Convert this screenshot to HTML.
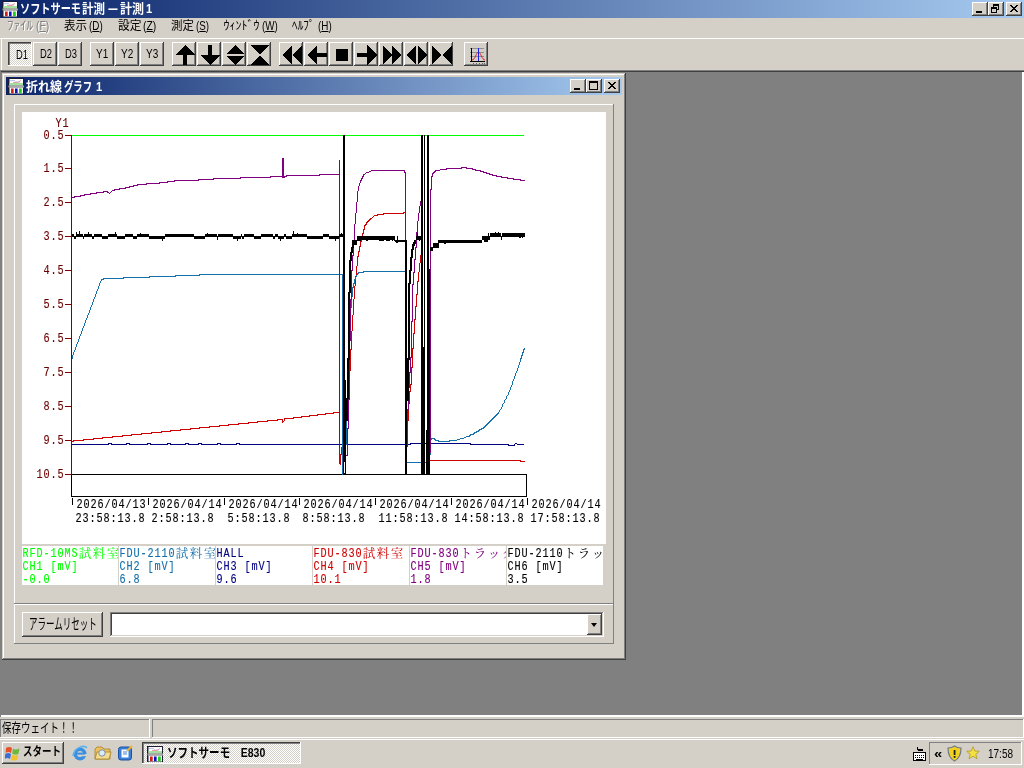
<!DOCTYPE html>
<html lang="ja"><head><meta charset="utf-8"><title>ソフトサーモ計測 - 計測1</title>
<style>
html,body{margin:0;padding:0;width:1024px;height:768px;overflow:hidden;background:#D4D0C8;}
body{position:relative;font-family:"Liberation Sans","Noto Sans CJK JP",sans-serif;font-size:12px;line-height:12px;color:#000;}
div,span,svg{position:absolute;box-sizing:border-box;}
.t{white-space:nowrap;transform-origin:0 0;display:block;}
u{text-decoration:underline;text-underline-offset:1px;}
.raised{background:#D4D0C8;box-shadow:inset -1px -1px 0 #404040,inset 1px 1px 0 #fff,inset -2px -2px 0 #808080;}
.tb{background:#D4D0C8;box-shadow:inset -1px -1px 0 #404040,inset 1px 1px 0 #fff,inset -2px -2px 0 #808080;width:24px;height:24px;top:42px;}
.tbp{background:repeating-conic-gradient(#fff 0% 25%,#D4D0C8 0% 50%) 0 0/2px 2px;box-shadow:inset -1px -1px 0 #fff,inset 1px 1px 0 #404040,inset 2px 2px 0 #808080;width:24px;height:24px;top:42px;}
.win{background:#D4D0C8;box-shadow:inset -1px -1px 0 #404040,inset 1px 1px 0 #D4D0C8,inset -2px -2px 0 #808080,inset 2px 2px 0 #fff;}
.sunken{background:#fff;box-shadow:inset -1px -1px 0 #fff,inset 1px 1px 0 #808080,inset -2px -2px 0 #D4D0C8,inset 2px 2px 0 #404040;}
.panel{background:#D4D0C8;box-shadow:inset -1px -1px 0 #808080,inset 1px 1px 0 #fff;}
.spane{background:#D4D0C8;box-shadow:inset -1px -1px 0 #fff,inset 1px 1px 0 #808080;}
.cap{background:#D4D0C8;box-shadow:inset -1px -1px 0 #404040,inset 1px 1px 0 #fff,inset -2px -2px 0 #808080;width:16px;height:14px;}
.grad{background:linear-gradient(90deg,#0A246A 0%,#A6CAF0 100%);}
.ttl{color:#fff;font-weight:bold;font-size:13px;line-height:13px;}
.lg{background:#fff;width:96px;height:39px;top:546px;overflow:hidden;}
</style></head>
<body>
<div id="root" style="left:0;top:0;width:1024px;height:768px;will-change:transform">
<div class="grad" style="left:0;top:0;width:1024px;height:18px"></div>
<svg style="left:2px;top:1px" width="16" height="16" viewBox="0 0 16 16">
<rect x="0" y="0" width="16" height="16" fill="#1c1c34"/>
<rect x="1.5" y="1" width="13.5" height="6.5" fill="#fff"/>
<rect x="1.5" y="5" width="13.5" height="2.5" fill="#a4e09c"/>
<path d="M2 2.6H7M7 4H12" stroke="#b0b8f0" stroke-width="0.9" fill="none"/><path d="M5 4.4H10L13 2.5" stroke="#e89090" stroke-width="0.9" fill="none"/>
<rect x="0.5" y="7.5" width="15.5" height="2" fill="#a8a8a8"/>
<rect x="1.5" y="9.5" width="13.5" height="6" fill="#fff"/>
<rect x="3" y="10.5" width="2.7" height="4.7" fill="#d02020"/><rect x="7" y="10.5" width="2.6" height="4.7" fill="#1010c0"/><rect x="11" y="10.5" width="2.8" height="4.7" fill="#20d020"/>
</svg>
<span id="t_main1" class="t ttl" style="left:20px;top:2px;transform:scaleX(0.7821);">ソフトサーモ</span>
<span id="t_main2" class="t ttl" style="left:82px;top:2px;transform:scaleX(0.8846);">計測 </span>
<span id="t_main3" class="t ttl" style="left:107px;top:2px;transform:scaleX(2.7500);">- </span>
<span id="t_main4" class="t ttl" style="left:120px;top:2px;transform:scaleX(0.9231);">計測</span>
<span id="t_main5" class="t ttl" style="left:146px;top:2px;transform:scaleX(0.8571);">1</span>
<div class="cap" style="left:972px;top:2px"><div style="left:4px;top:9px;width:6px;height:2px;background:#000"></div></div><div class="cap" style="left:988px;top:2px"><div style="left:5px;top:2px;width:6px;height:6px;border:1px solid #000;border-top-width:2px"></div><div style="left:3px;top:5px;width:6px;height:6px;border:1px solid #000;border-top-width:2px;background:#D4D0C8"></div></div><div class="cap" style="left:1006px;top:2px"><svg style="left:4px;top:3px" width="8" height="7" viewBox="0 0 8 7" shape-rendering="crispEdges"><path d="M0 0h2v1h1v1h2v-1h1v-1h2v1h-1v1h-1v1h-1v1h1v1h1v1h1v1h-2v-1h-1v-1h-2v1h-1v1h-2v-1h1v-1h1v-1h1v-1h-1v-1h-1v-1h-1z" fill="#000"/></svg></div>
<span id="m0as" class="t " style="left:8px;top:21px;transform:scaleX(1.0833);color:#fff">ﾌｧｲﾙ</span>
<span id="m0bs" class="t " style="left:37px;top:21px;transform:scaleX(0.8667);color:#fff">(<u>F</u>)</span>
<span id="m0a" class="t " style="left:7px;top:20px;transform:scaleX(1.0833);color:#808080">ﾌｧｲﾙ</span>
<span id="m0b" class="t " style="left:36px;top:20px;transform:scaleX(0.8667);color:#808080">(<u>F</u>)</span>
<span id="m1a" class="t " style="left:64px;top:20px;transform:scaleX(0.9583);">表示</span>
<span id="m1b" class="t " style="left:89px;top:20px;transform:scaleX(0.8235);">(<u>D</u>)</span>
<span id="m2a" class="t " style="left:117.5px;top:20px;transform:scaleX(0.9792);">設定</span>
<span id="m2b" class="t " style="left:143px;top:20px;transform:scaleX(0.8667);">(<u>Z</u>)</span>
<span id="m3a" class="t " style="left:170.5px;top:20px;transform:scaleX(0.9583);">測定</span>
<span id="m3b" class="t " style="left:196px;top:20px;transform:scaleX(0.8125);">(<u>S</u>)</span>
<span id="m4a" class="t " style="left:223.5px;top:20px;transform:scaleX(1.0000);">ｳｨﾝﾄﾞｳ</span>
<span id="m4b" class="t " style="left:261.5px;top:20px;transform:scaleX(0.8158);">(<u>W</u>)</span>
<span id="m5a" class="t " style="left:292px;top:20px;transform:scaleX(0.9375);">ﾍﾙﾌﾟ</span>
<span id="m5b" class="t " style="left:318px;top:20px;transform:scaleX(0.8235);">(<u>H</u>)</span>
<div style="left:0;top:38px;width:1024px;height:1px;background:#fff"></div>
<div style="left:0;top:70px;width:1024px;height:1px;background:#808080"></div>
<div style="left:1px;top:39px;width:1px;height:31px;background:#fff"></div>
<div class="tbp" style="left:8px"></div>
<span id="tb0" class="t " style="left:16px;top:49px;transform:scaleX(0.7500);font-size:12.5px;line-height:12.5px">D1</span>
<div class="tb" style="left:33px"></div>
<span id="tb1" class="t " style="left:40px;top:48px;transform:scaleX(0.7500);font-size:12.5px;line-height:12.5px">D2</span>
<div class="tb" style="left:58px"></div>
<span id="tb2" class="t " style="left:65px;top:48px;transform:scaleX(0.7500);font-size:12.5px;line-height:12.5px">D3</span>
<div class="tb" style="left:90px"></div>
<span id="tb3" class="t " style="left:96px;top:48px;transform:scaleX(0.8000);font-size:12.5px;line-height:12.5px">Y1</span>
<div class="tb" style="left:115px"></div>
<span id="tb4" class="t " style="left:121px;top:48px;transform:scaleX(0.8000);font-size:12.5px;line-height:12.5px">Y2</span>
<div class="tb" style="left:140px"></div>
<span id="tb5" class="t " style="left:146px;top:48px;transform:scaleX(0.8000);font-size:12.5px;line-height:12.5px">Y3</span>
<div class="tb" style="left:172px"><svg style="left:0;top:0" width="24" height="24" viewBox="0 0 24 24" shape-rendering="crispEdges"><path d="M13 3 L23 13 H15 V23 H11 V13 H3 Z" fill="#000"/></svg></div>
<div class="tb" style="left:197px"><svg style="left:0;top:0" width="24" height="24" viewBox="0 0 24 24" shape-rendering="crispEdges"><path d="M13 23 L23 13 H15 V3 H11 V13 H3 Z" fill="#000"/></svg></div>
<div class="tb" style="left:222px"><svg style="left:0;top:0" width="24" height="24" viewBox="0 0 24 24" shape-rendering="crispEdges"><path d="M13 3 L22 12 H4 Z M13 23 L22 14 H4 Z" fill="#000"/></svg></div>
<div class="tb" style="left:247px"><svg style="left:0;top:0" width="24" height="24" viewBox="0 0 24 24" shape-rendering="crispEdges"><path d="M4 3 H22 L13 12.5 Z M4 23 H22 L13 13.5 Z" fill="#000"/></svg></div>
<div class="tb" style="left:279px"><svg style="left:0;top:0" width="24" height="24" viewBox="0 0 24 24" shape-rendering="crispEdges"><path d="M13 3.5 V22.5 L3.5 13 Z M22.5 3.5 V22.5 L13 13 Z" fill="#000"/></svg></div>
<div class="tb" style="left:304px"><svg style="left:0;top:0" width="24" height="24" viewBox="0 0 24 24" shape-rendering="crispEdges"><path d="M3 13 L13 3 V11 H23 V15 H13 V23 Z" fill="#000"/></svg></div>
<div class="tb" style="left:329px"><svg style="left:0;top:0" width="24" height="24" viewBox="0 0 24 24" shape-rendering="crispEdges"><rect x="7" y="7" width="12" height="12" fill="#000"/></svg></div>
<div class="tb" style="left:354px"><svg style="left:0;top:0" width="24" height="24" viewBox="0 0 24 24" shape-rendering="crispEdges"><path d="M23 13 L13 3 V11 H3 V15 H13 V23 Z" fill="#000"/></svg></div>
<div class="tb" style="left:379px"><svg style="left:0;top:0" width="24" height="24" viewBox="0 0 24 24" shape-rendering="crispEdges"><path d="M4 3.5 V22.5 L13 13 Z M13 3.5 V22.5 L22.5 13 Z" fill="#000"/></svg></div>
<div class="tb" style="left:404px"><svg style="left:0;top:0" width="24" height="24" viewBox="0 0 24 24" shape-rendering="crispEdges"><path d="M12 3.5 V22.5 L3 13 Z M14 3.5 V22.5 L23 13 Z" fill="#000"/></svg></div>
<div class="tb" style="left:429px"><svg style="left:0;top:0" width="24" height="24" viewBox="0 0 24 24" shape-rendering="crispEdges"><path d="M3 3.5 V22.5 L12.5 13 Z M23 3.5 V22.5 L13.5 13 Z" fill="#000"/></svg></div>
<div class="tb" style="left:464px"><svg style="left:0;top:0" width="24" height="24" viewBox="0 0 24 24" shape-rendering="crispEdges"><path d="M6 6.5H20M6 10.5H20M6 14.5H20" stroke="#909090" fill="none"/><path d="M7.5 6V20M6 19.5H21" stroke="#000" fill="none"/><path d="M9 21v1M12 21v1M15 21v1M18 21v1M20 21v1" stroke="#606060" fill="none"/><path d="M8 18 C11 18 12.5 10 14.5 10 C16.5 10 18 18 21 18" stroke="#e02020" stroke-width="1" fill="none" shape-rendering="auto"/><path d="M14.5 6V19" stroke="#2020e0" stroke-width="1" fill="none"/></svg></div>
<div style="left:0;top:71px;width:1024px;height:646px;background:#808080;box-shadow:inset 1px 1px 0 #404040,inset -2px -2px 0 #fff"></div>
<div style="left:0;top:70px;width:1px;height:647px;background:#808080"></div>
<div class="win" style="left:2px;top:73px;width:624px;height:587px"></div>
<div class="grad" style="left:6px;top:77px;width:616px;height:18px"></div>
<svg style="left:8px;top:78px" width="16" height="16" viewBox="0 0 16 16">
<rect x="0" y="0" width="16" height="16" fill="#1c1c34"/>
<rect x="1.5" y="1" width="13.5" height="6.5" fill="#fff"/>
<rect x="1.5" y="5" width="13.5" height="2.5" fill="#a4e09c"/>
<path d="M2 2.6H7M7 4H12" stroke="#b0b8f0" stroke-width="0.9" fill="none"/><path d="M5 4.4H10L13 2.5" stroke="#e89090" stroke-width="0.9" fill="none"/>
<rect x="0.5" y="7.5" width="15.5" height="2" fill="#a8a8a8"/>
<rect x="1.5" y="9.5" width="13.5" height="6" fill="#fff"/>
<rect x="3" y="10.5" width="2.7" height="4.7" fill="#d02020"/><rect x="7" y="10.5" width="2.6" height="4.7" fill="#1010c0"/><rect x="11" y="10.5" width="2.8" height="4.7" fill="#20d020"/>
</svg>
<span id="t_child1" class="t ttl" style="left:26px;top:80px;transform:scaleX(0.9231);">折れ線</span>
<span id="t_child2" class="t ttl" style="left:64px;top:80px;transform:scaleX(0.7179);">グラフ </span>
<span id="t_child3" class="t ttl" style="left:96px;top:80px;transform:scaleX(0.8571);">1</span>
<div class="cap" style="left:570px;top:79px"><div style="left:4px;top:9px;width:6px;height:2px;background:#000"></div></div><div class="cap" style="left:586px;top:79px"><div style="left:3px;top:2px;width:9px;height:9px;border:1px solid #000;border-top-width:2px"></div></div><div class="cap" style="left:604px;top:79px"><svg style="left:4px;top:3px" width="8" height="7" viewBox="0 0 8 7" shape-rendering="crispEdges"><path d="M0 0h2v1h1v1h2v-1h1v-1h2v1h-1v1h-1v1h-1v1h1v1h1v1h1v1h-2v-1h-1v-1h-2v1h-1v1h-2v-1h1v-1h1v-1h1v-1h-1v-1h-1v-1h-1z" fill="#000"/></svg></div>
<div class="panel" style="left:14px;top:104px;width:600px;height:500px"></div>
<div class="panel" style="left:14px;top:604px;width:600px;height:40px"></div>
<div style="left:22px;top:112px;width:584px;height:432px;background:#fff"></div>
<svg style="left:22px;top:112px" width="584" height="432" viewBox="22 112 584 432" shape-rendering="crispEdges" font-family='"Liberation Mono","Noto Serif CJK SC",monospace' font-size="13">
<rect x="71.5" y="474.5" width="455" height="22" fill="none" stroke="#000"/>
<path d="M72,135.5 L524,135.5" stroke="#00FF00" stroke-width="1" fill="none" />
<path d="M72,444.5 L108,444.5 L108,443.5 L111,443.5 L111,444.5 L126,444.5 L126,443.5 L129,443.5 L129,444.5 L147,444.5 L147,443.5 L150,443.5 L150,444.5 L167,444.5 L167,443.5 L170,443.5 L170,444.5 L185,444.5 L185,443.5 L188,443.5 L188,444.5 L198,444.5 L198,443.5 L201,443.5 L201,444.5 L217,444.5 L217,443.5 L220,443.5 L220,444.5 L236,444.5 L236,443.5 L239,443.5 L239,444.5 L410,444.5 L410,443.5 L470,443.5 L470,444.5 L508,444.5 L508,445.5 L514,445.5 L514,444.5 L516,443.5 L518,444.5 L524,444.5" stroke="#000080" stroke-width="1" fill="none" />
<path d="M72.5,441.5 L72.5,441.5 L74.5,440.5 L74.5,440.5 L76.5,440.5 L76.5,440.5 L78.5,440.5 L78.5,440.5 L80.5,440.5 L80.5,440.5 L82.5,440.5 L82.5,440.5 L84.5,439.5 L84.5,439.5 L86.5,439.5 L86.5,439.5 L88.5,439.5 L88.5,439.5 L90.5,439.5 L90.5,439.5 L92.5,439.5 L92.5,439.5 L94.5,438.5 L94.5,438.5 L96.5,438.5 L96.5,438.5 L98.5,438.5 L98.5,438.5 L100.5,438.5 L100.5,438.5 L102.5,438.5 L102.5,437.5 L104.5,437.5 L104.5,437.5 L106.5,437.5 L106.5,437.5 L108.5,437.5 L108.5,437.5 L110.5,437.5 L110.5,437.5 L112.5,437.5 L112.5,436.5 L114.5,436.5 L114.5,436.5 L116.5,436.5 L116.5,436.5 L118.5,436.5 L118.5,436.5 L120.5,436.5 L120.5,436.5 L122.5,436.5 L122.5,435.5 L124.5,435.5 L124.5,435.5 L126.5,435.5 L126.5,435.5 L128.5,435.5 L128.5,435.5 L130.5,435.5 L130.5,435.5 L132.5,434.5 L132.5,434.5 L134.5,434.5 L134.5,434.5 L136.5,434.5 L136.5,434.5 L138.5,434.5 L138.5,434.5 L140.5,434.5 L140.5,434.5 L142.5,433.5 L142.5,433.5 L144.5,433.5 L144.5,433.5 L146.5,433.5 L146.5,433.5 L148.5,433.5 L148.5,433.5 L150.5,433.5 L150.5,433.5 L152.5,432.5 L152.5,432.5 L154.5,432.5 L154.5,432.5 L156.5,432.5 L156.5,432.5 L158.5,432.5 L158.5,432.5 L160.5,432.5 L160.5,432.5 L162.5,431.5 L162.5,431.5 L164.5,431.5 L164.5,431.5 L166.5,431.5 L166.5,431.5 L168.5,431.5 L168.5,431.5 L170.5,431.5 L170.5,430.5 L172.5,430.5 L172.5,430.5 L174.5,430.5 L174.5,430.5 L176.5,430.5 L176.5,430.5 L178.5,430.5 L178.5,430.5 L180.5,430.5 L180.5,429.5 L182.5,429.5 L182.5,429.5 L184.5,429.5 L184.5,429.5 L186.5,429.5 L186.5,429.5 L188.5,429.5 L188.5,429.5 L190.5,429.5 L190.5,428.5 L192.5,428.5 L192.5,428.5 L194.5,428.5 L194.5,428.5 L196.5,428.5 L196.5,428.5 L198.5,428.5 L198.5,428.5 L200.5,427.5 L200.5,427.5 L202.5,427.5 L202.5,427.5 L204.5,427.5 L204.5,427.5 L206.5,427.5 L206.5,427.5 L208.5,427.5 L208.5,427.5 L210.5,426.5 L210.5,426.5 L212.5,426.5 L212.5,426.5 L214.5,426.5 L214.5,426.5 L216.5,426.5 L216.5,426.5 L218.5,426.5 L218.5,426.5 L220.5,425.5 L220.5,425.5 L222.5,425.5 L222.5,425.5 L224.5,425.5 L224.5,425.5 L226.5,425.5 L226.5,425.5 L228.5,425.5 L228.5,424.5 L230.5,424.5 L230.5,424.5 L232.5,424.5 L232.5,424.5 L234.5,424.5 L234.5,424.5 L236.5,424.5 L236.5,424.5 L238.5,424.5 L238.5,423.5 L240.5,423.5 L240.5,423.5 L242.5,423.5 L242.5,423.5 L244.5,423.5 L244.5,423.5 L246.5,423.5 L246.5,423.5 L248.5,423.5 L248.5,422.5 L250.5,422.5 L250.5,422.5 L252.5,422.5 L252.5,422.5 L254.5,422.5 L254.5,422.5 L256.5,422.5 L256.5,422.5 L258.5,421.5 L258.5,421.5 L260.5,421.5 L260.5,421.5 L262.5,421.5 L262.5,421.5 L264.5,421.5 L264.5,421.5 L266.5,421.5 L266.5,421.5 L268.5,420.5 L268.5,420.5 L270.5,420.5 L270.5,420.5 L272.5,420.5 L272.5,420.5 L274.5,420.5 L274.5,420.5 L276.5,420.5 L276.5,420.5 L278.5,419.5 L278.5,419.5 L280.5,419.5 L280.5,419.5 L282.5,419.5 L282.5,420.5 L282.5,421.5 L282.5,422.5 L283.5,421.5 L284.5,420.5 L284.5,418.5 L286.5,418.5 L286.5,418.5 L288.5,418.5 L288.5,418.5 L290.5,418.5 L290.5,418.5 L292.5,418.5 L292.5,418.5 L294.5,417.5 L294.5,417.5 L296.5,417.5 L296.5,417.5 L298.5,417.5 L298.5,417.5 L300.5,417.5 L300.5,417.5 L302.5,416.5 L302.5,416.5 L304.5,416.5 L304.5,416.5 L306.5,416.5 L306.5,416.5 L308.5,416.5 L308.5,416.5 L310.5,415.5 L310.5,415.5 L312.5,415.5 L312.5,415.5 L314.5,415.5 L314.5,415.5 L316.5,415.5 L316.5,415.5 L318.5,414.5 L318.5,414.5 L320.5,414.5 L320.5,414.5 L322.5,414.5 L322.5,414.5 L324.5,414.5 L324.5,414.5 L326.5,413.5 L326.5,413.5 L328.5,413.5 L328.5,413.5 L330.5,413.5 L330.5,413.5 L332.5,413.5 L332.5,413.5 L334.5,412.5 L334.5,412.5 L336.5,412.5 L336.5,412.5 L338.5,412.5 L338.5,412.5" stroke="#D00000" stroke-width="1" fill="none" />
<path d="M338.5,412.5 L339.5,413.5 L339.5,414.5 L339.5,415.5 L339.5,416.5 L339.5,417.5 L339.5,418.5 L339.5,419.5 L339.5,420.5 L339.5,421.5 L339.5,422.5 L339.5,423.5 L339.5,424.5 L339.5,425.5 L339.5,426.5 L339.5,427.5 L339.5,428.5 L339.5,429.5 L339.5,430.5 L339.5,431.5 L339.5,432.5 L339.5,433.5 L339.5,434.5 L339.5,435.5 L339.5,436.5 L339.5,437.5 L339.5,438.5 L339.5,439.5 L339.5,440.5 L339.5,441.5 L339.5,442.5 L339.5,443.5 L339.5,444.5 L339.5,445.5 L339.5,446.5 L339.5,447.5 L339.5,448.5 L339.5,449.5 L339.5,450.5 L339.5,451.5 L339.5,452.5 L339.5,453.5 L339.5,454.5 L339.5,455.5 L339.5,456.5 L339.5,457.5 L339.5,458.5 L339.5,459.5 L339.5,460.5 L339.5,461.5 L339.5,462.5 L340.5,464.5 L340.5,462.5 L340.5,462.5 L340.5,460.5 L340.5,460.5 L340.5,458.5 L340.5,458.5 L340.5,456.5 L340.5,456.5 L340.5,454.5 L341.5,454.5 L341.5,452.5 L341.5,452.5 L341.5,450.5 L341.5,450.5 L341.5,448.5 L341.5,448.5 L342.5,446.5 L342.5,446.5 L342.5,444.5 L342.5,444.5 L342.5,442.5 L342.5,442.5 L342.5,440.5 L342.5,440.5" stroke="#D00000" stroke-width="1" fill="none" />
<path d="M342.5,454.5 L343.5,454.5 L343.5,452.5 L343.5,452.5 L343.5,450.5 L343.5,450.5 L343.5,448.5 L343.5,448.5 L343.5,446.5 L343.5,446.5 L343.5,444.5 L343.5,444.5 L343.5,442.5 L344.5,442.5 L344.5,440.5 L344.5,440.5 L344.5,438.5 L344.5,438.5 L344.5,436.5 L344.5,436.5 L344.5,434.5 L344.5,434.5 L344.5,432.5 L344.5,432.5 L344.5,430.5 L344.5,430.5 L345.5,428.5 L345.5,428.5 L345.5,426.5 L345.5,426.5 L345.5,424.5 L345.5,424.5 L345.5,422.5 L345.5,422.5 L345.5,420.5 L345.5,420.5 L345.5,418.5 L345.5,418.5 L345.5,416.5 L346.5,416.5 L346.5,414.5 L346.5,414.5 L346.5,412.5 L346.5,412.5 L346.5,410.5 L346.5,410.5 L346.5,408.5 L346.5,408.5 L346.5,406.5 L346.5,406.5 L346.5,404.5 L346.5,404.5 L346.5,402.5 L346.5,402.5 L347.5,400.5 L347.5,400.5 L347.5,398.5 L347.5,398.5 L347.5,396.5 L347.5,396.5 L347.5,394.5 L347.5,394.5 L348.5,392.5 L348.5,392.5 L348.5,390.5 L348.5,390.5 L348.5,388.5 L348.5,388.5 L348.5,386.5 L348.5,386.5 L348.5,384.5 L349.5,384.5 L349.5,382.5 L349.5,382.5 L349.5,380.5 L349.5,380.5 L349.5,378.5 L349.5,378.5 L349.5,376.5 L349.5,376.5 L349.5,374.5 L349.5,374.5 L349.5,372.5 L349.5,372.5 L349.5,370.5 L350.5,370.5 L350.5,368.5 L350.5,368.5 L350.5,366.5 L350.5,366.5 L350.5,364.5 L350.5,364.5 L350.5,362.5 L350.5,362.5 L350.5,360.5 L350.5,360.5 L350.5,358.5 L350.5,358.5 L350.5,356.5 L350.5,356.5 L350.5,354.5 L350.5,354.5 L350.5,352.5 L350.5,352.5 L350.5,350.5 L350.5,350.5 L351.5,348.5 L351.5,348.5 L351.5,346.5 L351.5,346.5 L351.5,344.5 L351.5,344.5 L351.5,342.5 L351.5,342.5 L351.5,340.5 L351.5,340.5 L351.5,338.5 L351.5,337.5 L351.5,336.5 L351.5,335.5 L351.5,334.5 L351.5,333.5 L351.5,332.5 L351.5,331.5 L352.5,330.5 L352.5,329.5 L352.5,328.5 L352.5,327.5 L352.5,326.5 L352.5,325.5 L352.5,324.5 L352.5,323.5 L352.5,322.5 L352.5,321.5 L352.5,320.5 L352.5,319.5 L352.5,318.5 L352.5,317.5 L352.5,316.5 L352.5,315.5 L353.5,314.5 L353.5,313.5 L353.5,312.5 L353.5,311.5 L353.5,310.5 L353.5,309.5 L353.5,308.5 L353.5,307.5 L353.5,306.5 L353.5,305.5 L353.5,304.5 L353.5,303.5 L353.5,302.5 L353.5,301.5 L353.5,300.5 L353.5,299.5 L354.5,298.5 L354.5,297.5 L354.5,296.5 L354.5,295.5 L354.5,294.5 L354.5,293.5 L354.5,292.5 L354.5,291.5 L354.5,290.5 L354.5,289.5 L354.5,288.5 L354.5,287.5 L354.5,286.5 L355.5,285.5 L355.5,284.5 L355.5,283.5 L355.5,282.5 L355.5,281.5 L355.5,280.5 L355.5,279.5 L355.5,278.5 L355.5,277.5 L355.5,276.5 L356.5,275.5 L356.5,274.5 L356.5,273.5 L356.5,272.5 L356.5,271.5 L356.5,270.5 L356.5,269.5 L356.5,268.5 L356.5,267.5 L356.5,266.5 L357.5,265.5 L357.5,264.5 L357.5,263.5 L357.5,262.5 L357.5,261.5 L357.5,260.5 L357.5,259.5 L357.5,258.5 L357.5,256.5 L358.5,256.5 L358.5,254.5 L358.5,254.5 L358.5,252.5 L358.5,252.5 L359.5,250.5 L359.5,250.5 L359.5,248.5 L359.5,248.5 L359.5,246.5 L360.5,246.5 L360.5,244.5 L360.5,244.5 L360.5,242.5 L360.5,242.5 L361.5,240.5 L361.5,240.5 L361.5,238.5 L361.5,238.5 L361.5,236.5 L362.5,236.5 L362.5,234.5 L362.5,234.5 L363.5,232.5 L363.5,232.5 L363.5,230.5 L363.5,230.5 L364.5,228.5 L364.5,228.5 L364.5,226.5 L364.5,226.5 L365.5,224.5 L366.5,224.5 L366.5,222.5 L367.5,222.5 L368.5,220.5 L369.5,220.5 L370.5,218.5 L371.5,218.5 L372.5,217.5 L373.5,216.5 L374.5,215.5 L376.5,215.5 L376.5,215.5 L378.5,214.5 L378.5,214.5 L380.5,214.5 L380.5,214.5 L382.5,214.5 L382.5,214.5 L384.5,213.5 L384.5,213.5 L386.5,213.5 L386.5,213.5 L388.5,213.5 L388.5,213.5 L390.5,213.5 L390.5,213.5 L392.5,213.5 L392.5,213.5 L394.5,213.5 L394.5,213.5 L396.5,213.5 L396.5,213.5 L398.5,213.5 L398.5,213.5 L400.5,213.5 L400.5,213.5 L402.5,213.5 L402.5,213.5 L404.5,212.5 L405.5,212.5" stroke="#D00000" stroke-width="1" fill="none" />
<path d="M406.5,446.5 L407.5,446.5 L407.5,444.5 L407.5,444.5 L407.5,442.5 L407.5,442.5 L407.5,440.5 L407.5,440.5 L407.5,438.5 L407.5,438.5 L407.5,436.5 L407.5,436.5 L407.5,434.5 L407.5,434.5 L407.5,432.5 L407.5,432.5 L407.5,430.5 L407.5,430.5 L407.5,428.5 L407.5,428.5 L407.5,426.5 L407.5,426.5 L407.5,424.5 L407.5,424.5 L407.5,422.5 L407.5,422.5 L407.5,420.5 L408.5,420.5 L408.5,418.5 L408.5,418.5 L408.5,416.5 L408.5,416.5 L408.5,414.5 L408.5,414.5 L408.5,412.5 L408.5,412.5 L408.5,410.5 L408.5,410.5 L408.5,408.5 L408.5,408.5 L408.5,406.5 L408.5,406.5 L408.5,404.5 L408.5,404.5 L409.5,402.5 L409.5,402.5 L409.5,400.5 L409.5,400.5 L409.5,398.5 L409.5,398.5 L409.5,396.5 L409.5,396.5 L409.5,394.5 L409.5,394.5 L409.5,392.5 L409.5,392.5 L410.5,390.5 L410.5,390.5 L410.5,388.5 L410.5,388.5 L410.5,386.5 L410.5,386.5 L410.5,384.5 L411.5,384.5 L411.5,382.5 L411.5,382.5 L411.5,380.5 L411.5,380.5 L411.5,378.5 L411.5,378.5 L411.5,376.5 L411.5,376.5 L411.5,374.5 L411.5,374.5 L411.5,372.5 L411.5,372.5 L411.5,370.5 L411.5,370.5 L411.5,368.5 L411.5,368.5 L412.5,366.5 L412.5,366.5 L412.5,364.5 L412.5,364.5 L412.5,362.5 L412.5,362.5 L412.5,360.5 L412.5,360.5 L412.5,358.5 L412.5,358.5 L412.5,356.5 L412.5,356.5 L412.5,354.5 L412.5,354.5 L412.5,352.5 L412.5,352.5 L412.5,350.5 L412.5,350.5 L412.5,348.5 L413.5,348.5 L413.5,346.5 L413.5,346.5 L413.5,344.5 L413.5,344.5 L413.5,342.5 L413.5,342.5 L413.5,340.5 L413.5,340.5 L413.5,338.5 L413.5,338.5 L413.5,336.5 L413.5,336.5 L413.5,334.5 L413.5,334.5 L414.5,332.5 L414.5,332.5 L414.5,330.5 L414.5,330.5 L414.5,328.5 L414.5,328.5 L414.5,326.5 L414.5,326.5 L414.5,324.5 L414.5,324.5 L414.5,322.5 L414.5,322.5 L414.5,320.5 L414.5,320.5 L415.5,318.5 L415.5,318.5 L415.5,316.5 L415.5,316.5 L415.5,314.5 L415.5,314.5 L415.5,312.5 L415.5,312.5 L415.5,310.5 L415.5,310.5 L415.5,308.5 L415.5,308.5 L415.5,306.5 L416.5,306.5 L416.5,304.5 L416.5,304.5 L416.5,302.5 L416.5,302.5 L416.5,300.5 L416.5,300.5 L416.5,298.5 L416.5,298.5 L416.5,296.5 L416.5,296.5 L416.5,294.5 L417.5,294.5 L417.5,292.5 L417.5,292.5 L417.5,290.5 L417.5,290.5 L417.5,288.5 L417.5,288.5 L417.5,286.5 L417.5,286.5 L417.5,284.5 L417.5,284.5 L417.5,282.5 L417.5,282.5 L418.5,280.5 L418.5,280.5 L418.5,278.5 L418.5,278.5 L418.5,276.5 L418.5,275.5 L418.5,274.5 L418.5,273.5 L418.5,272.5 L419.5,271.5 L419.5,270.5 L419.5,269.5 L419.5,268.5 L419.5,267.5 L419.5,266.5 L419.5,265.5 L419.5,264.5 L419.5,263.5 L420.5,262.5 L420.5,261.5 L420.5,260.5 L420.5,259.5 L420.5,258.5 L420.5,257.5 L420.5,256.5 L420.5,255.5 L421.5,254.5 L421.5,253.5" stroke="#D00000" stroke-width="1" fill="none" />
<path d="M430,460.5 L520,460.5 L520,461.5 L525,461.5" stroke="#D00000" stroke-width="1" fill="none" />
<path d="M72.5,358.5 L72.5,356.5 L72.5,355.5 L73.5,354.5 L73.5,353.5 L73.5,352.5 L74.5,351.5 L74.5,350.5 L75.5,349.5 L75.5,348.5 L75.5,347.5 L76.5,346.5 L76.5,345.5 L76.5,344.5 L77.5,343.5 L77.5,342.5 L78.5,341.5 L78.5,340.5 L78.5,339.5 L79.5,338.5 L79.5,337.5 L79.5,336.5 L80.5,335.5 L80.5,334.5 L81.5,333.5 L81.5,332.5 L81.5,331.5 L82.5,330.5 L82.5,329.5 L82.5,328.5 L83.5,327.5 L83.5,326.5 L84.5,325.5 L84.5,324.5 L84.5,323.5 L85.5,322.5 L85.5,321.5 L85.5,320.5 L86.5,319.5 L86.5,318.5 L87.5,317.5 L87.5,316.5 L87.5,315.5 L88.5,314.5 L88.5,313.5 L89.5,312.5 L89.5,311.5 L89.5,310.5 L90.5,309.5 L90.5,308.5 L90.5,307.5 L91.5,306.5 L91.5,305.5 L92.5,304.5 L92.5,303.5 L92.5,302.5 L93.5,301.5 L93.5,300.5 L93.5,299.5 L94.5,298.5 L94.5,297.5 L95.5,296.5 L95.5,295.5 L95.5,294.5 L96.5,293.5 L96.5,292.5 L96.5,291.5 L97.5,290.5 L97.5,289.5 L98.5,288.5 L98.5,287.5 L98.5,286.5 L99.5,285.5 L99.5,284.5 L99.5,283.5 L100.5,282.5 L100.5,281.5 L101.5,280.5 L101.5,279.5 L102.5,279.5 L104.5,278.5 L104.5,278.5 L106.5,278.5 L106.5,278.5 L108.5,278.5 L108.5,278.5 L110.5,278.5 L110.5,278.5 L112.5,278.5 L112.5,278.5 L114.5,278.5 L114.5,278.5 L116.5,278.5 L116.5,278.5 L118.5,278.5 L118.5,278.5 L120.5,278.5 L120.5,278.5 L122.5,278.5 L122.5,278.5 L124.5,277.5 L124.5,277.5 L126.5,277.5 L126.5,277.5 L128.5,277.5 L128.5,277.5 L130.5,277.5 L130.5,277.5 L132.5,277.5 L132.5,277.5 L134.5,277.5 L134.5,277.5 L136.5,277.5 L136.5,277.5 L138.5,277.5 L138.5,277.5 L140.5,277.5 L140.5,277.5 L142.5,277.5 L142.5,277.5 L144.5,277.5 L144.5,277.5 L146.5,277.5 L146.5,277.5 L148.5,277.5 L148.5,277.5 L150.5,276.5 L150.5,276.5 L152.5,276.5 L152.5,276.5 L154.5,276.5 L154.5,276.5 L156.5,276.5 L156.5,276.5 L158.5,276.5 L158.5,276.5 L160.5,276.5 L160.5,276.5 L162.5,276.5 L162.5,276.5 L164.5,276.5 L164.5,276.5 L166.5,276.5 L166.5,276.5 L168.5,276.5 L168.5,276.5 L170.5,276.5 L170.5,276.5 L172.5,276.5 L172.5,276.5 L174.5,276.5 L174.5,276.5 L176.5,275.5 L176.5,275.5 L178.5,275.5 L178.5,275.5 L180.5,275.5 L180.5,275.5 L182.5,275.5 L182.5,275.5 L184.5,275.5 L184.5,275.5 L186.5,275.5 L186.5,275.5 L188.5,275.5 L188.5,275.5 L190.5,275.5 L190.5,275.5 L192.5,275.5 L192.5,275.5 L194.5,275.5 L194.5,275.5 L196.5,275.5 L196.5,275.5 L198.5,275.5 L198.5,275.5 L200.5,274.5 L200.5,274.5 L202.5,274.5 L202.5,274.5 L204.5,274.5 L204.5,274.5 L206.5,274.5 L206.5,274.5 L208.5,274.5 L208.5,274.5 L210.5,274.5 L210.5,274.5 L212.5,274.5 L212.5,274.5 L214.5,274.5 L214.5,274.5 L216.5,274.5 L216.5,274.5 L218.5,274.5 L218.5,274.5 L220.5,274.5 L220.5,274.5 L222.5,274.5 L222.5,274.5 L224.5,274.5 L224.5,274.5 L226.5,274.5 L226.5,274.5 L228.5,274.5 L228.5,274.5 L230.5,274.5 L230.5,274.5 L232.5,274.5 L232.5,274.5 L234.5,274.5 L234.5,274.5 L236.5,274.5 L236.5,274.5 L238.5,274.5 L238.5,274.5 L240.5,274.5 L240.5,274.5 L242.5,274.5 L242.5,274.5 L244.5,274.5 L244.5,274.5 L246.5,274.5 L246.5,274.5 L248.5,274.5 L248.5,274.5 L250.5,274.5 L250.5,274.5 L252.5,274.5 L252.5,274.5 L254.5,274.5 L254.5,274.5 L256.5,274.5 L256.5,274.5 L258.5,274.5 L258.5,274.5 L260.5,274.5 L260.5,274.5 L262.5,274.5 L262.5,274.5 L264.5,274.5 L264.5,274.5 L266.5,274.5 L266.5,274.5 L268.5,274.5 L268.5,274.5 L270.5,274.5 L270.5,274.5 L272.5,274.5 L272.5,274.5 L274.5,274.5 L274.5,274.5 L276.5,274.5 L276.5,274.5 L278.5,274.5 L278.5,274.5 L280.5,274.5 L280.5,274.5 L282.5,274.5 L282.5,274.5 L284.5,274.5 L284.5,274.5 L286.5,274.5 L286.5,274.5 L288.5,274.5 L288.5,274.5 L290.5,274.5 L290.5,274.5 L292.5,274.5 L292.5,274.5 L294.5,274.5 L294.5,274.5 L296.5,274.5 L296.5,274.5 L298.5,274.5 L298.5,274.5 L300.5,274.5 L300.5,274.5 L302.5,274.5 L302.5,274.5 L304.5,274.5 L304.5,274.5 L306.5,274.5 L306.5,274.5 L308.5,274.5 L308.5,274.5 L310.5,274.5 L310.5,274.5 L312.5,274.5 L312.5,274.5 L314.5,274.5 L314.5,274.5 L316.5,274.5 L316.5,274.5 L318.5,274.5 L318.5,274.5 L320.5,274.5 L320.5,274.5 L322.5,274.5 L322.5,274.5 L324.5,274.5 L324.5,274.5 L326.5,274.5 L326.5,274.5 L328.5,274.5 L328.5,274.5 L330.5,274.5 L330.5,274.5 L332.5,274.5 L332.5,274.5 L334.5,274.5 L334.5,274.5 L336.5,274.5 L336.5,274.5 L338.5,274.5 L338.5,274.5 L340.5,274.5 L340.5,274.5 L342.5,274.5 L342.5,274.5 L342.5,276.5 L342.5,276.5 L342.5,278.5 L342.5,278.5 L342.5,280.5 L342.5,280.5 L342.5,282.5 L342.5,282.5 L342.5,284.5 L342.5,284.5 L342.5,286.5 L342.5,286.5 L342.5,288.5 L342.5,288.5 L342.5,290.5 L342.5,290.5 L342.5,292.5 L342.5,292.5 L342.5,294.5 L342.5,294.5 L342.5,296.5 L342.5,296.5 L342.5,298.5 L342.5,298.5 L342.5,300.5 L342.5,300.5 L342.5,302.5 L342.5,302.5 L342.5,304.5 L342.5,304.5 L342.5,306.5 L342.5,306.5 L342.5,308.5 L342.5,308.5 L342.5,310.5 L342.5,310.5 L342.5,312.5 L342.5,312.5 L342.5,314.5 L342.5,314.5 L342.5,316.5 L342.5,316.5 L342.5,318.5 L342.5,318.5 L342.5,320.5 L342.5,320.5 L342.5,322.5 L342.5,322.5 L342.5,324.5 L342.5,324.5 L342.5,326.5 L342.5,326.5 L342.5,328.5 L342.5,328.5 L342.5,330.5 L342.5,330.5 L342.5,332.5 L342.5,332.5 L342.5,334.5 L342.5,334.5 L342.5,336.5 L342.5,336.5 L342.5,338.5 L342.5,338.5 L342.5,340.5 L342.5,340.5 L342.5,342.5 L342.5,342.5 L342.5,344.5 L342.5,344.5 L342.5,346.5 L342.5,346.5 L342.5,348.5 L342.5,348.5 L342.5,350.5 L342.5,350.5 L342.5,352.5 L342.5,352.5 L342.5,354.5 L342.5,354.5 L342.5,356.5 L342.5,356.5 L342.5,358.5 L342.5,358.5 L342.5,360.5 L342.5,360.5 L342.5,362.5 L342.5,362.5 L342.5,364.5 L342.5,364.5 L342.5,366.5 L342.5,366.5 L342.5,368.5 L342.5,368.5 L342.5,370.5 L342.5,370.5 L342.5,372.5 L342.5,372.5 L342.5,374.5 L342.5,374.5 L342.5,376.5 L342.5,376.5 L342.5,378.5 L342.5,378.5 L342.5,380.5 L342.5,380.5 L342.5,382.5 L342.5,382.5 L342.5,384.5 L342.5,384.5 L342.5,386.5 L342.5,386.5 L342.5,388.5 L342.5,388.5 L342.5,390.5 L342.5,390.5 L342.5,392.5 L342.5,392.5 L342.5,394.5 L342.5,394.5 L342.5,396.5 L342.5,396.5 L342.5,398.5 L342.5,398.5 L342.5,400.5 L342.5,400.5 L342.5,402.5 L342.5,402.5 L342.5,404.5 L342.5,404.5 L342.5,406.5 L342.5,406.5 L342.5,408.5 L342.5,408.5 L342.5,410.5 L342.5,410.5 L342.5,412.5 L342.5,412.5 L342.5,414.5 L342.5,414.5 L342.5,416.5 L342.5,416.5 L342.5,418.5 L342.5,418.5 L342.5,420.5 L342.5,420.5 L342.5,422.5 L342.5,422.5 L342.5,424.5 L342.5,424.5 L342.5,426.5 L342.5,426.5 L342.5,428.5 L342.5,428.5 L342.5,430.5 L342.5,430.5 L342.5,432.5 L342.5,432.5 L342.5,434.5 L342.5,434.5 L342.5,436.5 L342.5,436.5 L342.5,438.5 L342.5,438.5 L342.5,440.5 L342.5,440.5 L342.5,442.5 L342.5,442.5 L342.5,444.5 L342.5,444.5 L342.5,446.5 L342.5,446.5 L342.5,448.5 L342.5,448.5 L342.5,450.5 L342.5,450.5 L342.5,452.5 L342.5,452.5 L342.5,454.5 L342.5,454.5 L342.5,456.5 L342.5,456.5 L342.5,458.5 L342.5,458.5 L342.5,460.5 L342.5,460.5 L342.5,462.5 L342.5,462.5 L342.5,464.5 L342.5,464.5 L342.5,466.5 L342.5,466.5 L342.5,468.5 L342.5,468.5 L342.5,470.5 L342.5,470.5 L342.5,472.5 L342.5,472.5 L342.5,474.5" stroke="#1470AA" stroke-width="1" fill="none" />
<path d="M346.5,444.5 L346.5,444.5 L346.5,442.5 L346.5,442.5 L346.5,440.5 L346.5,440.5 L346.5,438.5 L346.5,438.5 L346.5,436.5 L346.5,436.5 L346.5,434.5 L346.5,434.5 L346.5,432.5 L346.5,432.5 L346.5,430.5 L346.5,430.5 L346.5,428.5 L346.5,428.5 L346.5,426.5 L346.5,426.5 L346.5,424.5 L346.5,424.5 L346.5,422.5 L346.5,422.5 L346.5,420.5 L346.5,420.5 L346.5,418.5 L346.5,418.5 L346.5,416.5 L346.5,416.5 L346.5,414.5 L346.5,414.5 L346.5,412.5 L346.5,412.5 L346.5,410.5 L346.5,410.5 L346.5,408.5 L346.5,408.5 L346.5,406.5 L346.5,406.5 L346.5,404.5 L346.5,404.5 L346.5,402.5 L346.5,402.5 L346.5,400.5 L346.5,400.5 L347.5,398.5 L347.5,398.5 L347.5,396.5 L347.5,396.5 L347.5,394.5 L347.5,394.5 L347.5,392.5 L347.5,392.5 L347.5,390.5 L347.5,390.5 L347.5,388.5 L347.5,388.5 L347.5,386.5 L347.5,386.5 L347.5,384.5 L347.5,384.5 L347.5,382.5 L347.5,382.5 L347.5,380.5 L347.5,380.5 L347.5,378.5 L347.5,378.5 L347.5,376.5 L347.5,376.5 L347.5,374.5 L347.5,374.5 L347.5,372.5 L347.5,372.5 L347.5,370.5 L347.5,370.5 L347.5,368.5 L347.5,368.5 L347.5,366.5 L347.5,366.5 L347.5,364.5 L347.5,364.5 L347.5,362.5 L347.5,362.5 L347.5,360.5 L347.5,360.5 L347.5,358.5 L348.5,358.5 L348.5,356.5 L348.5,356.5 L348.5,354.5 L348.5,354.5 L348.5,352.5 L348.5,352.5 L348.5,350.5 L348.5,350.5 L348.5,348.5 L348.5,348.5 L348.5,346.5 L348.5,346.5 L348.5,344.5 L348.5,344.5 L348.5,342.5 L348.5,342.5 L348.5,340.5 L348.5,340.5 L349.5,338.5 L349.5,338.5 L349.5,336.5 L349.5,336.5 L349.5,334.5 L349.5,334.5 L349.5,332.5 L349.5,332.5 L349.5,330.5 L349.5,330.5 L349.5,328.5 L349.5,327.5 L349.5,326.5 L349.5,325.5 L349.5,324.5 L349.5,323.5 L349.5,322.5 L350.5,321.5 L350.5,320.5 L350.5,319.5 L350.5,318.5 L350.5,317.5 L350.5,316.5 L350.5,315.5 L350.5,314.5 L350.5,313.5 L350.5,312.5 L350.5,311.5 L350.5,310.5 L350.5,309.5 L350.5,308.5 L351.5,307.5 L351.5,306.5 L351.5,305.5 L351.5,304.5 L351.5,303.5 L351.5,302.5 L351.5,301.5 L351.5,300.5 L351.5,299.5 L351.5,298.5 L351.5,297.5 L352.5,296.5 L352.5,295.5 L352.5,294.5 L352.5,293.5 L352.5,292.5 L352.5,291.5 L352.5,290.5 L352.5,289.5 L352.5,288.5 L353.5,286.5 L353.5,286.5 L353.5,284.5 L353.5,284.5 L354.5,282.5 L354.5,282.5 L354.5,280.5 L354.5,280.5 L355.5,278.5 L355.5,277.5 L356.5,276.5 L356.5,275.5 L357.5,274.5 L358.5,272.5 L360.5,272.5 L360.5,272.5 L362.5,272.5 L362.5,272.5 L364.5,271.5 L364.5,271.5 L366.5,271.5 L366.5,271.5 L368.5,271.5 L368.5,271.5 L370.5,271.5 L370.5,271.5 L372.5,271.5 L372.5,271.5 L374.5,271.5 L374.5,271.5 L376.5,271.5 L376.5,271.5 L378.5,271.5 L378.5,271.5 L380.5,271.5 L380.5,271.5 L382.5,271.5 L382.5,271.5 L384.5,271.5 L384.5,271.5 L386.5,271.5 L386.5,271.5 L388.5,271.5 L388.5,271.5 L390.5,271.5 L390.5,271.5 L392.5,271.5 L392.5,271.5 L394.5,271.5 L394.5,271.5 L396.5,271.5 L396.5,271.5 L398.5,271.5 L398.5,271.5 L400.5,271.5 L400.5,271.5 L402.5,271.5 L402.5,271.5 L404.5,271.5 L404.5,270.5" stroke="#1470AA" stroke-width="1" fill="none" />
<path d="M406,462.5 L428,462.5" stroke="#1470AA" stroke-width="1" fill="none" />
<path d="M430.5,454.5 L430.5,453.5 L430.5,452.5 L430.5,451.5 L430.5,450.5 L430.5,449.5 L430.5,448.5 L430.5,447.5 L430.5,446.5 L430.5,445.5 L430.5,444.5 L430.5,443.5 L430.5,442.5 L430.5,441.5 L430.5,440.5 L430.5,439.5 L432.5,438.5 L432.5,438.5 L434.5,438.5 L434.5,439.5 L436.5,440.5 L436.5,440.5 L438.5,440.5 L438.5,441.5 L440.5,441.5 L440.5,441.5 L442.5,441.5 L442.5,441.5 L444.5,441.5 L444.5,441.5 L446.5,441.5 L446.5,441.5 L448.5,441.5 L448.5,441.5 L450.5,440.5 L450.5,440.5 L452.5,440.5 L452.5,440.5 L454.5,440.5 L454.5,440.5 L456.5,440.5 L457.5,439.5 L458.5,439.5 L459.5,439.5 L460.5,438.5 L461.5,438.5 L462.5,438.5 L463.5,438.5 L464.5,437.5 L465.5,437.5 L466.5,436.5 L467.5,436.5 L468.5,436.5 L470.5,435.5 L470.5,434.5 L472.5,434.5 L472.5,434.5 L474.5,433.5 L474.5,432.5 L476.5,432.5 L476.5,431.5 L478.5,431.5 L478.5,430.5 L480.5,429.5 L480.5,429.5 L482.5,428.5 L482.5,428.5 L484.5,427.5 L484.5,426.5 L486.5,425.5 L486.5,424.5 L488.5,423.5 L488.5,422.5 L490.5,421.5 L490.5,420.5 L492.5,419.5 L492.5,418.5 L494.5,417.5 L494.5,416.5 L496.5,415.5 L496.5,414.5 L498.5,413.5 L498.5,412.5 L499.5,411.5 L499.5,410.5 L500.5,409.5 L501.5,408.5 L501.5,407.5 L502.5,406.5 L502.5,404.5 L503.5,403.5 L504.5,402.5 L504.5,401.5 L504.5,400.5 L505.5,399.5 L506.5,398.5 L506.5,397.5 L506.5,396.5 L507.5,395.5 L508.5,394.5 L508.5,393.5 L508.5,392.5 L509.5,391.5 L509.5,390.5 L510.5,389.5 L510.5,388.5 L510.5,387.5 L511.5,386.5 L511.5,385.5 L512.5,384.5 L512.5,382.5 L512.5,381.5 L513.5,380.5 L513.5,379.5 L514.5,378.5 L514.5,377.5 L514.5,376.5 L515.5,375.5 L515.5,374.5 L515.5,373.5 L516.5,372.5 L516.5,371.5 L517.5,370.5 L517.5,369.5 L517.5,368.5 L518.5,367.5 L518.5,366.5 L518.5,365.5 L519.5,364.5 L519.5,363.5 L519.5,362.5 L520.5,361.5 L520.5,360.5 L520.5,358.5 L521.5,358.5 L521.5,356.5 L521.5,356.5 L522.5,354.5 L522.5,354.5 L522.5,352.5 L523.5,352.5 L523.5,350.5 L523.5,350.5 L524.5,348.5 L524.5,348.5" stroke="#1470AA" stroke-width="1" fill="none" />
<path d="M70.5,197.5 L72.5,197.5 L72.5,197.5 L74.5,197.5 L74.5,196.5 L76.5,196.5 L76.5,196.5 L78.5,196.5 L78.5,196.5 L80.5,196.5 L80.5,195.5 L82.5,195.5 L82.5,195.5 L84.5,195.5 L84.5,194.5 L86.5,194.5 L86.5,194.5 L88.5,194.5 L88.5,194.5 L90.5,194.5 L90.5,193.5 L92.5,193.5 L92.5,193.5 L94.5,193.5 L94.5,193.5 L96.5,193.5 L96.5,192.5 L98.5,192.5 L98.5,192.5 L100.5,192.5 L100.5,192.5 L102.5,192.5 L102.5,192.5 L104.5,191.5 L104.5,191.5 L106.5,191.5 L106.5,191.5 L108.5,192.5 L109.5,193.5 L110.5,192.5 L111.5,191.5 L112.5,190.5 L112.5,190.5 L114.5,190.5 L114.5,189.5 L116.5,189.5 L116.5,189.5 L118.5,189.5 L118.5,189.5 L120.5,188.5 L120.5,188.5 L122.5,188.5 L122.5,188.5 L124.5,188.5 L124.5,188.5 L126.5,187.5 L126.5,187.5 L128.5,187.5 L128.5,187.5 L130.5,186.5 L130.5,186.5 L132.5,186.5 L132.5,186.5 L134.5,185.5 L134.5,185.5 L136.5,185.5 L136.5,185.5 L138.5,184.5 L138.5,184.5 L140.5,184.5 L140.5,184.5 L142.5,184.5 L142.5,184.5 L144.5,184.5 L144.5,184.5 L146.5,184.5 L146.5,183.5 L148.5,183.5 L148.5,183.5 L150.5,183.5 L150.5,183.5 L152.5,183.5 L152.5,183.5 L154.5,183.5 L154.5,183.5 L156.5,183.5 L156.5,183.5 L158.5,183.5 L158.5,183.5 L160.5,182.5 L160.5,182.5 L162.5,182.5 L162.5,182.5 L164.5,182.5 L164.5,182.5 L166.5,182.5 L166.5,182.5 L168.5,181.5 L168.5,181.5 L170.5,181.5 L170.5,181.5 L172.5,181.5 L172.5,181.5 L174.5,181.5 L174.5,180.5 L176.5,180.5 L176.5,180.5 L178.5,180.5 L178.5,180.5 L180.5,180.5 L180.5,180.5 L182.5,180.5 L182.5,180.5 L184.5,180.5 L184.5,180.5 L186.5,180.5 L186.5,180.5 L188.5,180.5 L188.5,180.5 L190.5,180.5 L190.5,180.5 L192.5,180.5 L192.5,180.5 L194.5,180.5 L194.5,180.5 L196.5,180.5 L196.5,180.5 L198.5,180.5 L198.5,179.5 L200.5,179.5 L200.5,179.5 L202.5,179.5 L202.5,179.5 L204.5,179.5 L204.5,179.5 L206.5,179.5 L206.5,179.5 L208.5,179.5 L208.5,179.5 L210.5,179.5 L210.5,179.5 L212.5,179.5 L212.5,179.5 L214.5,178.5 L214.5,178.5 L216.5,178.5 L216.5,178.5 L218.5,178.5 L218.5,178.5 L220.5,178.5 L220.5,178.5 L222.5,178.5 L222.5,178.5 L224.5,178.5 L224.5,178.5 L226.5,178.5 L226.5,178.5 L228.5,178.5 L228.5,178.5 L230.5,178.5 L230.5,178.5 L232.5,178.5 L232.5,178.5 L234.5,178.5 L234.5,178.5 L236.5,178.5 L236.5,178.5 L238.5,178.5 L238.5,178.5 L240.5,178.5 L240.5,177.5 L242.5,177.5 L242.5,177.5 L244.5,177.5 L244.5,177.5 L246.5,177.5 L246.5,177.5 L248.5,177.5 L248.5,177.5 L250.5,177.5 L250.5,177.5 L252.5,177.5 L252.5,177.5 L254.5,177.5 L254.5,177.5 L256.5,177.5 L256.5,177.5 L258.5,177.5 L258.5,177.5 L260.5,177.5 L260.5,177.5 L262.5,177.5 L262.5,177.5 L264.5,177.5 L264.5,177.5 L266.5,177.5 L266.5,177.5 L268.5,177.5 L268.5,177.5 L270.5,177.5 L270.5,176.5 L272.5,176.5 L272.5,176.5 L274.5,176.5 L274.5,176.5 L276.5,176.5 L276.5,176.5 L278.5,176.5 L278.5,176.5 L280.5,176.5 L280.5,176.5 L282.5,176.5 L282.5,177.5 L284.5,177.5 L284.5,176.5 L286.5,176.5 L286.5,175.5 L288.5,175.5 L288.5,175.5 L290.5,175.5 L290.5,175.5 L292.5,175.5 L292.5,175.5 L294.5,175.5 L294.5,175.5 L296.5,175.5 L296.5,175.5 L298.5,175.5 L298.5,175.5 L300.5,175.5 L300.5,175.5 L302.5,175.5 L302.5,175.5 L304.5,175.5 L304.5,175.5 L306.5,175.5 L306.5,175.5 L308.5,175.5 L308.5,175.5 L310.5,175.5 L310.5,175.5 L312.5,175.5 L312.5,175.5 L314.5,175.5 L314.5,175.5 L316.5,175.5 L316.5,175.5 L318.5,175.5 L318.5,175.5 L320.5,174.5 L320.5,174.5 L322.5,174.5 L322.5,174.5 L324.5,174.5 L324.5,174.5 L326.5,174.5 L326.5,174.5 L328.5,174.5 L328.5,174.5 L330.5,174.5 L330.5,174.5 L332.5,174.5 L332.5,174.5 L334.5,174.5 L334.5,174.5 L336.5,174.5 L336.5,174.5 L338.5,174.5 L338.5,174.5" stroke="#800080" stroke-width="1" fill="none" />
<rect x="282" y="158" width="2" height="19" fill="#800080"/>
<path d="M339.5,160 L339.5,448" stroke="#800080" stroke-width="1" fill="none" />
<path d="M346.5,456.5 L347.5,454.5 L347.5,454.5 L347.5,452.5 L347.5,452.5 L347.5,450.5 L347.5,450.5 L347.5,448.5 L347.5,448.5 L347.5,446.5 L347.5,446.5 L347.5,444.5 L347.5,444.5 L347.5,442.5 L347.5,442.5 L347.5,440.5 L347.5,440.5 L347.5,438.5 L347.5,438.5 L347.5,436.5 L347.5,436.5 L347.5,434.5 L347.5,434.5 L347.5,432.5 L347.5,432.5 L347.5,430.5 L347.5,430.5 L347.5,428.5 L348.5,428.5 L348.5,426.5 L348.5,426.5 L348.5,424.5 L348.5,424.5 L348.5,422.5 L348.5,422.5 L348.5,420.5 L348.5,420.5 L348.5,418.5 L348.5,418.5 L348.5,416.5 L348.5,416.5 L348.5,414.5 L348.5,414.5 L348.5,412.5 L348.5,412.5 L348.5,410.5 L348.5,410.5 L348.5,408.5 L348.5,408.5 L348.5,406.5 L348.5,406.5 L348.5,404.5 L348.5,404.5 L348.5,402.5 L348.5,402.5 L348.5,400.5 L348.5,400.5 L349.5,398.5 L349.5,398.5 L349.5,396.5 L349.5,396.5 L349.5,394.5 L349.5,394.5 L349.5,392.5 L349.5,392.5 L349.5,390.5 L349.5,390.5 L349.5,388.5 L349.5,388.5 L349.5,386.5 L349.5,386.5 L349.5,384.5 L349.5,384.5 L349.5,382.5 L349.5,382.5 L349.5,380.5 L349.5,380.5 L349.5,378.5 L349.5,378.5 L349.5,376.5 L349.5,376.5 L349.5,374.5 L349.5,374.5 L349.5,372.5 L349.5,372.5 L349.5,370.5 L349.5,370.5 L349.5,368.5 L349.5,368.5 L349.5,366.5 L349.5,366.5 L349.5,364.5 L349.5,364.5 L349.5,362.5 L349.5,362.5 L349.5,360.5 L349.5,360.5 L349.5,358.5 L349.5,358.5 L349.5,356.5 L349.5,356.5 L349.5,354.5 L349.5,354.5 L349.5,352.5 L349.5,352.5 L349.5,350.5 L349.5,350.5 L349.5,348.5 L349.5,348.5 L349.5,346.5 L349.5,346.5 L349.5,344.5 L349.5,344.5 L349.5,342.5 L349.5,342.5 L349.5,340.5 L350.5,340.5 L350.5,338.5 L350.5,338.5 L350.5,336.5 L350.5,336.5 L350.5,334.5 L350.5,334.5 L350.5,332.5 L350.5,332.5 L350.5,330.5 L350.5,330.5 L350.5,328.5 L350.5,328.5 L350.5,326.5 L350.5,326.5 L350.5,324.5 L350.5,324.5 L350.5,322.5 L350.5,322.5 L350.5,320.5 L350.5,320.5 L350.5,318.5 L350.5,318.5 L350.5,316.5 L350.5,316.5 L350.5,314.5 L350.5,314.5 L350.5,312.5 L350.5,312.5 L350.5,310.5 L350.5,310.5 L350.5,308.5 L350.5,308.5 L350.5,306.5 L350.5,306.5 L350.5,304.5 L350.5,304.5 L350.5,302.5 L350.5,302.5 L350.5,300.5 L350.5,300.5 L351.5,298.5 L351.5,298.5 L351.5,296.5 L351.5,296.5 L351.5,294.5 L351.5,294.5 L351.5,292.5 L351.5,292.5 L351.5,290.5 L351.5,290.5 L351.5,288.5 L351.5,288.5 L351.5,286.5 L351.5,286.5 L351.5,284.5 L351.5,284.5 L351.5,282.5 L351.5,282.5 L351.5,280.5 L351.5,280.5 L351.5,278.5 L351.5,278.5 L351.5,276.5 L351.5,276.5 L351.5,274.5 L351.5,274.5 L351.5,272.5 L351.5,272.5 L351.5,270.5 L352.5,270.5 L352.5,268.5 L352.5,268.5 L352.5,266.5 L352.5,266.5 L352.5,264.5 L352.5,264.5 L352.5,262.5 L352.5,262.5 L352.5,260.5 L352.5,260.5 L352.5,258.5 L352.5,258.5 L352.5,256.5 L352.5,256.5 L353.5,254.5 L353.5,254.5 L353.5,252.5 L353.5,252.5 L353.5,250.5 L353.5,250.5 L353.5,248.5 L353.5,248.5 L353.5,246.5 L353.5,246.5 L353.5,244.5 L353.5,244.5 L353.5,242.5 L353.5,242.5 L353.5,240.5 L354.5,240.5 L354.5,238.5 L354.5,238.5 L354.5,236.5 L354.5,236.5 L354.5,234.5 L354.5,234.5 L354.5,232.5 L354.5,232.5 L354.5,230.5 L354.5,230.5 L354.5,228.5 L354.5,228.5 L354.5,226.5 L354.5,226.5 L354.5,224.5 L355.5,223.5 L355.5,222.5 L355.5,221.5 L355.5,220.5 L355.5,219.5 L355.5,218.5 L355.5,217.5 L355.5,216.5 L355.5,215.5 L355.5,214.5 L355.5,213.5 L356.5,212.5 L356.5,211.5 L356.5,210.5 L356.5,209.5 L356.5,208.5 L356.5,207.5 L356.5,206.5 L356.5,205.5 L356.5,204.5 L356.5,203.5 L356.5,202.5 L357.5,201.5 L357.5,200.5 L357.5,199.5 L357.5,198.5 L357.5,197.5 L357.5,196.5 L357.5,195.5 L357.5,194.5 L357.5,193.5 L357.5,192.5 L357.5,191.5 L358.5,190.5 L358.5,189.5 L358.5,188.5 L358.5,187.5 L358.5,186.5 L359.5,185.5 L359.5,184.5 L359.5,183.5 L360.5,182.5 L360.5,180.5 L361.5,180.5 L361.5,178.5 L362.5,178.5 L362.5,176.5 L363.5,176.5 L363.5,174.5 L364.5,174.5 L365.5,173.5 L366.5,172.5 L368.5,172.5 L369.5,171.5 L370.5,171.5 L371.5,170.5 L372.5,170.5 L373.5,170.5 L374.5,170.5 L375.5,170.5 L376.5,170.5 L377.5,170.5 L378.5,170.5 L379.5,170.5 L380.5,170.5 L381.5,170.5 L382.5,170.5 L383.5,170.5 L384.5,170.5 L385.5,170.5 L386.5,170.5 L387.5,170.5 L388.5,170.5 L389.5,170.5 L390.5,170.5 L391.5,170.5 L392.5,170.5 L393.5,170.5 L394.5,170.5 L395.5,170.5 L396.5,170.5 L397.5,170.5 L398.5,170.5 L399.5,170.5 L400.5,170.5 L401.5,170.5 L402.5,170.5 L404.5,170.5 L404.5,172.5 L405.5,172.5 L405.5,174.5 L405.5,174.5 L405.5,176.5 L405.5,176.5 L405.5,178.5 L405.5,178.5 L405.5,180.5 L405.5,180.5 L405.5,182.5 L405.5,182.5 L405.5,184.5 L405.5,184.5 L405.5,186.5 L405.5,186.5 L405.5,188.5 L405.5,188.5 L405.5,190.5 L405.5,190.5 L405.5,192.5 L405.5,192.5 L405.5,194.5 L405.5,194.5 L405.5,196.5 L405.5,196.5 L405.5,198.5 L405.5,198.5 L405.5,200.5 L405.5,200.5 L405.5,202.5 L405.5,202.5 L405.5,204.5 L405.5,204.5 L405.5,206.5 L405.5,206.5 L405.5,208.5 L405.5,208.5 L405.5,210.5 L405.5,210.5 L405.5,212.5 L405.5,212.5 L405.5,214.5 L405.5,214.5 L405.5,216.5 L405.5,216.5 L405.5,218.5 L405.5,218.5 L405.5,220.5 L405.5,220.5 L405.5,222.5 L405.5,222.5 L405.5,224.5 L405.5,224.5 L405.5,226.5 L405.5,226.5 L405.5,228.5 L405.5,228.5 L405.5,230.5 L405.5,230.5 L405.5,232.5 L405.5,232.5 L405.5,234.5 L405.5,234.5 L405.5,236.5 L405.5,236.5 L405.5,238.5 L405.5,238.5 L405.5,240.5 L405.5,240.5 L405.5,242.5 L405.5,242.5 L405.5,244.5 L405.5,244.5 L405.5,246.5 L405.5,246.5 L405.5,248.5" stroke="#800080" stroke-width="1" fill="none" />
<path d="M407.5,424.5 L407.5,422.5 L407.5,422.5 L407.5,420.5 L407.5,420.5 L407.5,418.5 L407.5,418.5 L407.5,416.5 L407.5,416.5 L407.5,414.5 L407.5,414.5 L407.5,412.5 L407.5,412.5 L407.5,410.5 L407.5,410.5 L408.5,408.5 L408.5,408.5 L408.5,406.5 L408.5,406.5 L408.5,404.5 L408.5,404.5 L408.5,402.5 L408.5,402.5 L408.5,400.5 L408.5,400.5 L408.5,398.5 L408.5,398.5 L408.5,396.5 L408.5,396.5 L408.5,394.5 L408.5,394.5 L408.5,392.5 L408.5,392.5 L408.5,390.5 L408.5,390.5 L408.5,388.5 L408.5,388.5 L409.5,386.5 L409.5,386.5 L409.5,384.5 L409.5,384.5 L409.5,382.5 L409.5,382.5 L409.5,380.5 L409.5,380.5 L409.5,378.5 L409.5,378.5 L409.5,376.5 L409.5,376.5 L409.5,374.5 L409.5,374.5 L409.5,372.5 L410.5,372.5 L410.5,370.5 L410.5,370.5 L410.5,368.5 L410.5,368.5 L410.5,366.5 L410.5,366.5 L410.5,364.5 L410.5,364.5 L410.5,362.5 L410.5,362.5 L410.5,360.5 L410.5,360.5 L410.5,358.5 L410.5,358.5 L411.5,356.5 L411.5,356.5 L411.5,354.5 L411.5,354.5 L411.5,352.5 L411.5,352.5 L411.5,350.5 L411.5,350.5 L411.5,348.5 L411.5,348.5 L411.5,346.5 L411.5,346.5 L411.5,344.5 L411.5,344.5 L411.5,342.5 L411.5,342.5 L411.5,340.5 L411.5,340.5 L411.5,338.5 L411.5,338.5 L411.5,336.5 L411.5,336.5 L411.5,334.5 L411.5,334.5 L411.5,332.5 L411.5,332.5 L411.5,330.5 L411.5,330.5 L411.5,328.5 L411.5,328.5 L411.5,326.5 L411.5,326.5 L411.5,324.5 L411.5,324.5 L411.5,322.5 L411.5,322.5 L412.5,320.5 L412.5,320.5 L412.5,318.5 L412.5,318.5 L412.5,316.5 L412.5,316.5 L412.5,314.5 L412.5,314.5 L412.5,312.5 L412.5,312.5 L412.5,310.5 L412.5,310.5 L412.5,308.5 L412.5,308.5 L412.5,306.5 L412.5,306.5 L412.5,304.5 L412.5,304.5 L412.5,302.5 L412.5,302.5 L412.5,300.5 L412.5,300.5 L412.5,298.5 L412.5,298.5 L412.5,296.5 L412.5,296.5 L412.5,294.5 L412.5,294.5 L412.5,292.5 L412.5,292.5 L412.5,290.5 L412.5,290.5 L412.5,288.5 L412.5,288.5 L412.5,286.5 L412.5,286.5 L412.5,284.5 L413.5,284.5 L413.5,282.5 L413.5,282.5 L413.5,280.5 L413.5,280.5 L413.5,278.5 L413.5,278.5 L413.5,276.5 L413.5,276.5 L413.5,274.5 L413.5,274.5 L413.5,272.5 L414.5,272.5 L414.5,270.5 L414.5,270.5 L414.5,268.5 L414.5,268.5 L414.5,266.5 L414.5,266.5 L414.5,264.5 L414.5,264.5 L414.5,262.5 L414.5,262.5 L414.5,260.5 L414.5,260.5 L415.5,258.5 L415.5,258.5 L415.5,256.5 L415.5,256.5 L415.5,254.5 L415.5,254.5 L415.5,252.5 L415.5,252.5 L415.5,250.5 L415.5,250.5 L415.5,248.5 L415.5,248.5 L416.5,246.5 L416.5,246.5 L416.5,244.5 L416.5,244.5 L416.5,242.5 L416.5,242.5 L416.5,240.5 L416.5,240.5 L416.5,238.5 L416.5,238.5 L416.5,236.5 L416.5,236.5 L416.5,234.5 L416.5,234.5 L416.5,232.5 L417.5,232.5 L417.5,230.5 L417.5,230.5 L417.5,228.5 L417.5,228.5 L417.5,226.5 L417.5,226.5 L417.5,224.5 L417.5,223.5 L417.5,222.5 L417.5,221.5 L418.5,220.5 L418.5,219.5 L418.5,218.5 L418.5,217.5 L418.5,216.5 L418.5,215.5 L418.5,214.5 L418.5,213.5 L419.5,212.5 L419.5,211.5 L419.5,210.5 L419.5,209.5 L419.5,208.5 L419.5,207.5 L419.5,206.5 L420.5,205.5 L420.5,204.5 L420.5,203.5 L420.5,202.5 L420.5,201.5 L420.5,200.5" stroke="#800080" stroke-width="1" fill="none" />
<path d="M430.5,452.5 L430.5,450.5 L430.5,450.5 L430.5,448.5 L430.5,448.5 L430.5,446.5 L430.5,446.5 L430.5,444.5 L430.5,444.5 L430.5,442.5 L430.5,442.5 L430.5,440.5 L430.5,440.5 L430.5,438.5 L430.5,438.5 L430.5,436.5 L430.5,436.5 L430.5,434.5 L430.5,434.5 L430.5,432.5 L430.5,432.5 L430.5,430.5 L430.5,430.5 L430.5,428.5 L430.5,428.5 L430.5,426.5 L430.5,426.5 L430.5,424.5 L430.5,424.5 L430.5,422.5 L430.5,422.5 L430.5,420.5 L430.5,420.5 L430.5,418.5 L430.5,418.5 L430.5,416.5 L430.5,416.5 L430.5,414.5 L430.5,414.5 L430.5,412.5 L430.5,412.5 L430.5,410.5 L430.5,410.5 L430.5,408.5 L430.5,408.5 L430.5,406.5 L430.5,406.5 L430.5,404.5 L430.5,404.5 L430.5,402.5 L430.5,402.5 L430.5,400.5 L430.5,400.5 L430.5,398.5 L430.5,398.5 L430.5,396.5 L430.5,396.5 L430.5,394.5 L430.5,394.5 L430.5,392.5 L430.5,392.5 L430.5,390.5 L430.5,390.5 L430.5,388.5 L430.5,388.5 L430.5,386.5 L430.5,386.5 L430.5,384.5 L430.5,384.5 L430.5,382.5 L430.5,382.5 L430.5,380.5 L430.5,380.5 L430.5,378.5 L430.5,378.5 L430.5,376.5 L430.5,376.5 L430.5,374.5 L430.5,374.5 L430.5,372.5 L430.5,372.5 L430.5,370.5 L430.5,370.5 L430.5,368.5 L430.5,368.5 L430.5,366.5 L430.5,366.5 L430.5,364.5 L430.5,364.5 L430.5,362.5 L430.5,362.5 L430.5,360.5 L430.5,360.5 L430.5,358.5 L430.5,358.5 L430.5,356.5 L430.5,356.5 L430.5,354.5 L430.5,354.5 L430.5,352.5 L430.5,352.5 L430.5,350.5 L430.5,350.5 L430.5,348.5 L430.5,348.5 L430.5,346.5 L430.5,346.5 L430.5,344.5 L430.5,344.5 L430.5,342.5 L430.5,342.5 L430.5,340.5 L430.5,340.5 L430.5,338.5 L430.5,338.5 L430.5,336.5 L430.5,336.5 L430.5,334.5 L430.5,334.5 L430.5,332.5 L430.5,332.5 L430.5,330.5 L430.5,330.5 L430.5,328.5 L430.5,328.5 L430.5,326.5 L430.5,326.5 L430.5,324.5 L430.5,324.5 L430.5,322.5 L430.5,322.5 L430.5,320.5 L430.5,320.5 L430.5,318.5 L430.5,318.5 L430.5,316.5 L430.5,316.5 L430.5,314.5 L430.5,314.5 L430.5,312.5 L430.5,312.5 L430.5,310.5 L430.5,310.5 L430.5,308.5 L430.5,308.5 L430.5,306.5 L430.5,306.5 L430.5,304.5 L430.5,304.5 L430.5,302.5 L430.5,302.5 L430.5,300.5 L430.5,300.5 L430.5,298.5 L430.5,298.5 L430.5,296.5 L430.5,296.5 L430.5,294.5 L430.5,294.5 L430.5,292.5 L430.5,292.5 L430.5,290.5 L430.5,290.5 L430.5,288.5 L430.5,288.5 L430.5,286.5 L430.5,286.5 L430.5,284.5 L430.5,284.5 L430.5,282.5 L430.5,282.5 L430.5,280.5 L430.5,280.5 L430.5,278.5 L430.5,278.5 L430.5,276.5 L430.5,276.5 L430.5,274.5 L430.5,274.5 L430.5,272.5 L430.5,272.5 L430.5,270.5 L430.5,270.5 L430.5,268.5 L430.5,268.5 L430.5,266.5 L430.5,266.5 L430.5,264.5 L430.5,264.5 L430.5,262.5 L430.5,262.5 L430.5,260.5 L430.5,260.5 L430.5,258.5 L430.5,258.5 L430.5,256.5 L430.5,256.5 L430.5,254.5 L430.5,254.5 L430.5,252.5 L430.5,252.5 L430.5,250.5 L430.5,250.5 L430.5,248.5 L430.5,248.5 L430.5,246.5 L430.5,246.5 L430.5,244.5 L430.5,244.5 L430.5,242.5 L430.5,242.5 L430.5,240.5 L430.5,240.5 L430.5,238.5 L430.5,238.5 L430.5,236.5 L430.5,236.5 L430.5,234.5 L430.5,234.5 L430.5,232.5 L430.5,232.5 L430.5,230.5 L430.5,230.5 L430.5,228.5 L430.5,228.5 L430.5,226.5 L430.5,226.5 L430.5,224.5 L430.5,224.5 L430.5,222.5 L430.5,222.5 L430.5,220.5 L430.5,220.5 L430.5,218.5 L430.5,218.5 L430.5,216.5 L430.5,216.5 L430.5,214.5 L430.5,214.5 L430.5,212.5 L430.5,212.5 L430.5,210.5 L430.5,210.5 L430.5,208.5 L430.5,208.5 L430.5,206.5 L430.5,206.5 L430.5,204.5 L430.5,204.5 L430.5,202.5 L430.5,202.5 L430.5,200.5 L430.5,200.5 L430.5,198.5 L430.5,198.5 L430.5,196.5 L430.5,196.5 L430.5,194.5 L430.5,194.5 L430.5,192.5 L430.5,192.5 L430.5,190.5 L430.5,190.5 L431.5,188.5 L431.5,188.5 L431.5,186.5 L431.5,186.5 L431.5,184.5 L431.5,184.5 L431.5,182.5 L431.5,182.5 L431.5,180.5 L431.5,180.5 L431.5,178.5 L431.5,178.5 L431.5,176.5 L432.5,176.5 L432.5,174.5 L432.5,174.5 L433.5,172.5 L434.5,172.5 L435.5,170.5 L436.5,170.5 L437.5,170.5 L438.5,170.5 L439.5,170.5 L440.5,169.5 L442.5,169.5 L442.5,169.5 L444.5,169.5 L444.5,169.5 L446.5,169.5 L446.5,168.5 L448.5,168.5 L448.5,168.5 L450.5,168.5 L450.5,168.5 L452.5,168.5 L452.5,168.5 L454.5,168.5 L454.5,168.5 L456.5,168.5 L456.5,168.5 L458.5,168.5 L458.5,168.5 L460.5,168.5 L460.5,168.5 L462.5,167.5 L462.5,167.5 L464.5,167.5 L464.5,167.5 L466.5,167.5 L466.5,168.5 L468.5,168.5 L468.5,168.5 L470.5,168.5 L470.5,168.5 L472.5,168.5 L472.5,169.5 L474.5,169.5 L474.5,169.5 L476.5,170.5 L476.5,170.5 L478.5,170.5 L478.5,170.5 L480.5,170.5 L480.5,171.5 L482.5,171.5 L482.5,171.5 L484.5,172.5 L484.5,172.5 L486.5,172.5 L486.5,173.5 L488.5,173.5 L488.5,173.5 L490.5,174.5 L490.5,174.5 L492.5,174.5 L492.5,175.5 L494.5,175.5 L494.5,175.5 L496.5,175.5 L496.5,176.5 L498.5,176.5 L498.5,176.5 L500.5,176.5 L500.5,176.5 L502.5,177.5 L502.5,177.5 L504.5,177.5 L504.5,177.5 L506.5,177.5 L506.5,177.5 L508.5,178.5 L508.5,178.5 L510.5,178.5 L510.5,178.5 L512.5,178.5 L512.5,178.5 L514.5,179.5 L514.5,179.5 L516.5,179.5 L516.5,179.5 L518.5,179.5 L518.5,179.5 L520.5,179.5 L520.5,180.5 L522.5,180.5 L522.5,180.5 L524.5,180.5 L524.5,180.5" stroke="#800080" stroke-width="1" fill="none" />
<g fill="#000">
<rect x="72" y="234" width="2" height="3"/><rect x="74" y="236" width="2" height="3"/><rect x="76" y="234" width="1" height="3"/><rect x="76" y="232" width="1" height="3"/><rect x="77" y="234" width="5" height="3"/><rect x="79" y="231" width="1" height="3"/><rect x="82" y="234" width="1" height="3"/><rect x="83" y="236" width="1" height="3"/><rect x="84" y="234" width="8" height="3"/><rect x="88" y="232" width="1" height="3"/><rect x="92" y="236" width="2" height="3"/><rect x="94" y="234" width="8" height="3"/><rect x="102" y="236" width="6" height="3"/><rect x="108" y="234" width="6" height="3"/><rect x="114" y="234" width="3" height="3"/><rect x="115" y="232" width="1" height="3"/><rect x="117" y="236" width="6" height="3"/><rect x="123" y="236" width="2" height="3"/><rect x="125" y="234" width="6" height="3"/><rect x="131" y="234" width="2" height="3"/><rect x="133" y="236" width="4" height="3"/><rect x="137" y="234" width="6" height="3"/><rect x="140" y="233" width="1" height="3"/><rect x="143" y="234" width="6" height="3"/><rect x="149" y="236" width="3" height="3"/><rect x="152" y="236" width="6" height="3"/><rect x="158" y="236" width="1" height="3"/><rect x="159" y="236" width="6" height="3"/><rect x="162" y="239" width="1" height="2"/><rect x="165" y="234" width="5" height="3"/><rect x="170" y="234" width="5" height="3"/><rect x="175" y="234" width="5" height="3"/><rect x="180" y="234" width="4" height="3"/><rect x="184" y="234" width="2" height="3"/><rect x="186" y="234" width="6" height="3"/><rect x="192" y="234" width="2" height="3"/><rect x="194" y="236" width="2" height="3"/><rect x="196" y="236" width="1" height="3"/><rect x="197" y="236" width="8" height="3"/><rect x="205" y="234" width="5" height="3"/><rect x="207" y="233" width="1" height="3"/><rect x="210" y="234" width="6" height="3"/><rect x="216" y="234" width="1" height="3"/><rect x="217" y="236" width="1" height="3"/><rect x="217" y="239" width="1" height="1"/><rect x="218" y="234" width="3" height="3"/><rect x="221" y="234" width="2" height="3"/><rect x="223" y="234" width="6" height="3"/><rect x="229" y="234" width="4" height="3"/><rect x="233" y="236" width="8" height="3"/><rect x="237" y="239" width="1" height="2"/><rect x="241" y="234" width="1" height="3"/><rect x="242" y="236" width="2" height="3"/><rect x="244" y="234" width="2" height="3"/><rect x="246" y="234" width="8" height="3"/><rect x="254" y="236" width="3" height="3"/><rect x="257" y="236" width="3" height="3"/><rect x="260" y="236" width="1" height="3"/><rect x="261" y="234" width="4" height="3"/><rect x="265" y="234" width="4" height="3"/><rect x="269" y="234" width="3" height="3"/><rect x="272" y="234" width="1" height="3"/><rect x="273" y="236" width="2" height="3"/><rect x="275" y="234" width="3" height="3"/><rect x="278" y="236" width="4" height="3"/><rect x="280" y="239" width="1" height="2"/><rect x="282" y="236" width="2" height="3"/><rect x="284" y="234" width="2" height="3"/><rect x="286" y="236" width="6" height="3"/><rect x="292" y="234" width="2" height="3"/><rect x="293" y="231" width="1" height="3"/><rect x="294" y="234" width="2" height="3"/><rect x="296" y="234" width="3" height="3"/><rect x="297" y="233" width="1" height="3"/><rect x="299" y="234" width="4" height="3"/><rect x="303" y="234" width="4" height="3"/><rect x="307" y="236" width="8" height="3"/><rect x="315" y="236" width="8" height="3"/><rect x="323" y="234" width="6" height="3"/><rect x="329" y="236" width="2" height="3"/><rect x="331" y="236" width="8" height="3"/><rect x="335" y="239" width="1" height="2"/><rect x="339" y="234" width="4" height="3"/><rect x="341" y="233" width="1" height="3"/>
<rect x="352" y="240" width="5" height="4"/>
<rect x="357" y="236" width="38" height="4"/><rect x="357" y="240" width="3" height="1"/><rect x="360" y="240" width="1" height="1"/><rect x="366" y="240" width="2" height="1"/><rect x="379" y="240" width="2" height="1"/><rect x="381" y="240" width="2" height="1"/><rect x="383" y="240" width="1" height="1"/><rect x="386" y="240" width="2" height="1"/><rect x="388" y="240" width="2" height="1"/><rect x="392" y="240" width="1" height="1"/><rect x="394" y="240" width="1" height="1"/>
<rect x="395" y="240" width="11" height="2"/><rect x="396" y="242" width="2" height="1"/>
<rect x="397" y="236" width="1" height="4"/>
<rect x="416" y="236" width="5" height="4"/><rect x="419" y="240" width="1" height="1"/>
<rect x="417" y="233" width="1" height="3"/>
<rect x="430" y="247" width="3" height="4"/>
<rect x="433" y="243" width="6" height="5"/>
<rect x="438" y="240" width="44" height="3"/>
<rect x="440" y="240" width="22" height="3"/><rect x="444" y="243" width="2" height="1"/>
<rect x="482" y="236" width="8" height="4"/><rect x="487" y="240" width="1" height="1"/>
<rect x="484" y="240" width="4" height="2"/>
<rect x="488" y="233" width="1" height="3"/>
<rect x="490" y="233" width="3" height="4"/><rect x="493" y="233" width="5" height="4"/><rect x="498" y="233" width="3" height="4"/><rect x="501" y="236" width="1" height="4"/><rect x="502" y="233" width="1" height="4"/>
<rect x="503" y="233" width="22" height="4"/><rect x="519" y="237" width="2" height="1"/><rect x="522" y="237" width="1" height="1"/>
<rect x="495" y="232" width="1" height="2"/>
<rect x="498" y="232" width="1" height="2"/>
<rect x="343" y="135" width="2" height="339"/>
<rect x="343" y="380" width="3" height="94"/>
<rect x="344" y="462" width="1" height="11" fill="#fff"/>
<rect x="405" y="240" width="2" height="234"/>
<rect x="421" y="135" width="2" height="339"/>
<rect x="424" y="135" width="1" height="339"/>
<rect x="421" y="347" width="4" height="127"/>
<rect x="426" y="430" width="4" height="44"/>
<rect x="427" y="135" width="2" height="339"/>
<rect x="427" y="269" width="3" height="205"/>
</g>
<path d="M346.5,420.5 L346.5,418.5 L346.5,418.5 L346.5,416.5 L346.5,416.5 L346.5,414.5 L346.5,414.5 L346.5,412.5 L346.5,412.5 L346.5,410.5 L346.5,410.5 L346.5,408.5 L346.5,408.5 L346.5,406.5 L346.5,406.5 L346.5,404.5 L346.5,404.5 L346.5,402.5 L346.5,402.5 L346.5,400.5 L346.5,400.5 L347.5,398.5 L347.5,398.5 L347.5,396.5 L347.5,396.5 L347.5,394.5 L347.5,394.5 L347.5,392.5 L347.5,392.5 L347.5,390.5 L347.5,390.5 L347.5,388.5 L347.5,388.5 L347.5,386.5 L347.5,386.5 L347.5,384.5 L347.5,384.5 L347.5,382.5 L347.5,382.5 L347.5,380.5 L347.5,380.5 L347.5,378.5 L347.5,378.5 L347.5,376.5 L347.5,376.5 L347.5,374.5 L347.5,374.5 L347.5,372.5 L347.5,372.5 L347.5,370.5 L347.5,370.5 L347.5,368.5 L347.5,368.5 L347.5,366.5 L347.5,366.5 L347.5,364.5 L347.5,364.5 L347.5,362.5 L347.5,362.5 L347.5,360.5 L347.5,360.5 L347.5,358.5 L348.5,358.5 L348.5,356.5 L348.5,356.5 L348.5,354.5 L348.5,354.5 L348.5,352.5 L348.5,352.5 L348.5,350.5 L348.5,350.5 L348.5,348.5 L348.5,348.5 L348.5,346.5 L348.5,346.5 L348.5,344.5 L348.5,344.5 L348.5,342.5 L348.5,342.5 L348.5,340.5 L348.5,340.5 L348.5,338.5 L348.5,338.5 L348.5,336.5 L348.5,336.5 L348.5,334.5 L348.5,334.5 L348.5,332.5 L348.5,332.5 L348.5,330.5 L348.5,330.5 L348.5,328.5 L348.5,328.5 L348.5,326.5 L348.5,326.5 L348.5,324.5 L348.5,324.5 L348.5,322.5 L348.5,322.5 L348.5,320.5 L348.5,320.5 L348.5,318.5 L348.5,318.5 L348.5,316.5 L348.5,316.5 L348.5,314.5 L348.5,314.5 L348.5,312.5 L348.5,312.5 L348.5,310.5 L348.5,310.5 L348.5,308.5 L348.5,308.5 L348.5,306.5 L348.5,306.5 L348.5,304.5 L348.5,304.5 L348.5,302.5 L348.5,302.5 L348.5,300.5 L348.5,300.5 L348.5,298.5 L348.5,298.5 L348.5,296.5 L348.5,296.5 L348.5,294.5 L348.5,294.5 L349.5,292.5 L349.5,292.5 L349.5,290.5 L349.5,290.5 L349.5,288.5 L349.5,288.5 L349.5,286.5 L349.5,286.5 L349.5,284.5 L349.5,284.5 L349.5,282.5 L349.5,282.5 L349.5,280.5 L349.5,280.5 L349.5,278.5 L349.5,278.5 L349.5,276.5 L349.5,276.5 L349.5,274.5 L349.5,274.5 L349.5,272.5 L349.5,272.5 L349.5,270.5 L349.5,270.5 L349.5,268.5 L349.5,268.5 L349.5,266.5 L349.5,266.5 L349.5,264.5 L349.5,264.5 L349.5,262.5 L349.5,262.5 L350.5,260.5 L350.5,260.5 L350.5,258.5 L350.5,258.5 L350.5,256.5 L350.5,256.5 L350.5,254.5 L350.5,254.5 L351.5,252.5 L351.5,252.5 L351.5,250.5 L351.5,250.5 L351.5,248.5 L352.5,247.5 L352.5,246.5 L352.5,245.5 L352.5,244.5 L352.5,243.5 L354.5,243.5 L354.5,243.5 L356.5,243.5 L356.5,243.5" stroke="#000" stroke-width="2" fill="none" />
<path d="M407.5,400.5 L407.5,398.5 L407.5,398.5 L407.5,396.5 L407.5,396.5 L407.5,394.5 L407.5,394.5 L407.5,392.5 L407.5,392.5 L407.5,390.5 L407.5,390.5 L407.5,388.5 L407.5,388.5 L407.5,386.5 L407.5,386.5 L407.5,384.5 L407.5,384.5 L407.5,382.5 L407.5,382.5 L407.5,380.5 L407.5,380.5 L407.5,378.5 L407.5,378.5 L407.5,376.5 L407.5,376.5 L407.5,374.5 L407.5,374.5 L407.5,372.5 L407.5,372.5 L407.5,370.5 L407.5,370.5 L407.5,368.5 L407.5,368.5 L407.5,366.5 L407.5,366.5 L407.5,364.5 L407.5,364.5 L407.5,362.5 L407.5,362.5 L407.5,360.5 L407.5,360.5 L407.5,358.5 L408.5,358.5 L408.5,356.5 L408.5,356.5 L408.5,354.5 L408.5,354.5 L408.5,352.5 L408.5,352.5 L408.5,350.5 L408.5,350.5 L408.5,348.5 L408.5,348.5 L408.5,346.5 L408.5,346.5 L408.5,344.5 L408.5,344.5 L408.5,342.5 L408.5,342.5 L408.5,340.5 L408.5,340.5 L408.5,338.5 L408.5,338.5 L408.5,336.5 L408.5,336.5 L408.5,334.5 L408.5,334.5 L408.5,332.5 L408.5,332.5 L408.5,330.5 L408.5,330.5 L408.5,328.5 L408.5,328.5 L408.5,326.5 L408.5,326.5 L408.5,324.5 L408.5,324.5 L408.5,322.5 L408.5,322.5 L408.5,320.5 L408.5,320.5 L408.5,318.5 L408.5,318.5 L408.5,316.5 L408.5,316.5 L408.5,314.5 L408.5,314.5 L408.5,312.5 L408.5,312.5 L408.5,310.5 L408.5,310.5 L408.5,308.5 L408.5,308.5 L408.5,306.5 L408.5,306.5 L408.5,304.5 L408.5,304.5 L408.5,302.5 L408.5,302.5 L408.5,300.5 L408.5,300.5 L408.5,298.5 L408.5,298.5 L408.5,296.5 L408.5,296.5 L408.5,294.5 L408.5,294.5 L408.5,292.5 L408.5,292.5 L408.5,290.5 L408.5,290.5 L408.5,288.5 L408.5,288.5 L408.5,286.5 L408.5,286.5 L408.5,284.5 L409.5,283.5 L409.5,282.5 L409.5,281.5 L409.5,280.5 L409.5,279.5 L409.5,278.5 L409.5,277.5 L409.5,276.5 L409.5,275.5 L409.5,274.5 L409.5,273.5 L409.5,272.5 L409.5,271.5 L410.5,270.5 L410.5,269.5 L410.5,268.5 L410.5,267.5 L410.5,266.5 L410.5,265.5 L410.5,264.5 L410.5,263.5 L410.5,262.5 L410.5,261.5 L410.5,260.5 L410.5,259.5 L410.5,258.5 L411.5,257.5 L411.5,256.5 L411.5,255.5 L411.5,254.5 L411.5,253.5 L411.5,252.5 L411.5,251.5 L411.5,250.5 L412.5,249.5 L412.5,248.5 L412.5,247.5 L412.5,246.5 L412.5,244.5 L413.5,244.5 L413.5,242.5 L414.5,242.5 L414.5,240.5 L415.5,240.5" stroke="#000" stroke-width="2" fill="none" />
<path d="M71.5,135 L71.5,475" stroke="#800000" stroke-width="1" fill="none" />
<path d="M65,135.5 L72,135.5" stroke="#800000" stroke-width="1" fill="none" />
<path d="M65,168.5 L72,168.5" stroke="#800000" stroke-width="1" fill="none" />
<path d="M65,202.5 L72,202.5" stroke="#800000" stroke-width="1" fill="none" />
<path d="M65,236.5 L72,236.5" stroke="#800000" stroke-width="1" fill="none" />
<path d="M65,270.5 L72,270.5" stroke="#800000" stroke-width="1" fill="none" />
<path d="M65,304.5 L72,304.5" stroke="#800000" stroke-width="1" fill="none" />
<path d="M65,338.5 L72,338.5" stroke="#800000" stroke-width="1" fill="none" />
<path d="M65,372.5 L72,372.5" stroke="#800000" stroke-width="1" fill="none" />
<path d="M65,406.5 L72,406.5" stroke="#800000" stroke-width="1" fill="none" />
<path d="M65,440.5 L72,440.5" stroke="#800000" stroke-width="1" fill="none" />
<path d="M65,474.5 L72,474.5" stroke="#800000" stroke-width="1" fill="none" />
<text transform="translate(0,138.7) scale(1,1.33)" x="46.5 53.5 60.5" y="0" fill="#6a0000" text-anchor="middle" font-size="10.2" stroke="#6a0000" stroke-width="0.1">0.5</text>
<text transform="translate(0,171.7) scale(1,1.33)" x="46.5 53.5 60.5" y="0" fill="#6a0000" text-anchor="middle" font-size="10.2" stroke="#6a0000" stroke-width="0.1">1.5</text>
<text transform="translate(0,205.7) scale(1,1.33)" x="46.5 53.5 60.5" y="0" fill="#6a0000" text-anchor="middle" font-size="10.2" stroke="#6a0000" stroke-width="0.1">2.5</text>
<text transform="translate(0,239.7) scale(1,1.33)" x="46.5 53.5 60.5" y="0" fill="#6a0000" text-anchor="middle" font-size="10.2" stroke="#6a0000" stroke-width="0.1">3.5</text>
<text transform="translate(0,273.7) scale(1,1.33)" x="46.5 53.5 60.5" y="0" fill="#6a0000" text-anchor="middle" font-size="10.2" stroke="#6a0000" stroke-width="0.1">4.5</text>
<text transform="translate(0,307.7) scale(1,1.33)" x="46.5 53.5 60.5" y="0" fill="#6a0000" text-anchor="middle" font-size="10.2" stroke="#6a0000" stroke-width="0.1">5.5</text>
<text transform="translate(0,341.7) scale(1,1.33)" x="46.5 53.5 60.5" y="0" fill="#6a0000" text-anchor="middle" font-size="10.2" stroke="#6a0000" stroke-width="0.1">6.5</text>
<text transform="translate(0,375.7) scale(1,1.33)" x="46.5 53.5 60.5" y="0" fill="#6a0000" text-anchor="middle" font-size="10.2" stroke="#6a0000" stroke-width="0.1">7.5</text>
<text transform="translate(0,409.7) scale(1,1.33)" x="46.5 53.5 60.5" y="0" fill="#6a0000" text-anchor="middle" font-size="10.2" stroke="#6a0000" stroke-width="0.1">8.5</text>
<text transform="translate(0,443.7) scale(1,1.33)" x="46.5 53.5 60.5" y="0" fill="#6a0000" text-anchor="middle" font-size="10.2" stroke="#6a0000" stroke-width="0.1">9.5</text>
<text transform="translate(0,477.7) scale(1,1.33)" x="39.5 46.5 53.5 60.5" y="0" fill="#6a0000" text-anchor="middle" font-size="10.2" stroke="#6a0000" stroke-width="0.1">10.5</text>
<text transform="translate(0,126.8) scale(1,1.33)" x="58.5 65.5" y="0" fill="#6a0000" text-anchor="middle" font-size="10.2" stroke="#6a0000" stroke-width="0.1">Y1</text>
<rect x="72" y="498" width="1" height="7" fill="#000"/>
<text transform="translate(0,508) scale(1,1.33)" x="79.5 86.5 93.5 100.5 107.5 114.5 121.5 128.5 135.5 142.5" y="0" fill="#000" text-anchor="middle" font-size="10.2" stroke="#000" stroke-width="0.1">2026/04/13</text>
<text transform="translate(0,522) scale(1,1.33)" x="78.5 85.5 92.5 99.5 106.5 113.5 120.5 127.5 134.5 141.5" y="0" fill="#000" text-anchor="middle" font-size="10.2" stroke="#000" stroke-width="0.1">23:58:13.8</text>
<rect x="148" y="498" width="1" height="7" fill="#000"/>
<text transform="translate(0,508) scale(1,1.33)" x="155.5 162.5 169.5 176.5 183.5 190.5 197.5 204.5 211.5 218.5" y="0" fill="#000" text-anchor="middle" font-size="10.2" stroke="#000" stroke-width="0.1">2026/04/14</text>
<text transform="translate(0,522) scale(1,1.33)" x="154.5 161.5 168.5 175.5 182.5 189.5 196.5 203.5 210.5" y="0" fill="#000" text-anchor="middle" font-size="10.2" stroke="#000" stroke-width="0.1">2:58:13.8</text>
<rect x="224" y="498" width="1" height="7" fill="#000"/>
<text transform="translate(0,508) scale(1,1.33)" x="231.5 238.5 245.5 252.5 259.5 266.5 273.5 280.5 287.5 294.5" y="0" fill="#000" text-anchor="middle" font-size="10.2" stroke="#000" stroke-width="0.1">2026/04/14</text>
<text transform="translate(0,522) scale(1,1.33)" x="230.5 237.5 244.5 251.5 258.5 265.5 272.5 279.5 286.5" y="0" fill="#000" text-anchor="middle" font-size="10.2" stroke="#000" stroke-width="0.1">5:58:13.8</text>
<rect x="299" y="498" width="1" height="7" fill="#000"/>
<text transform="translate(0,508) scale(1,1.33)" x="306.5 313.5 320.5 327.5 334.5 341.5 348.5 355.5 362.5 369.5" y="0" fill="#000" text-anchor="middle" font-size="10.2" stroke="#000" stroke-width="0.1">2026/04/14</text>
<text transform="translate(0,522) scale(1,1.33)" x="305.5 312.5 319.5 326.5 333.5 340.5 347.5 354.5 361.5" y="0" fill="#000" text-anchor="middle" font-size="10.2" stroke="#000" stroke-width="0.1">8:58:13.8</text>
<rect x="375" y="498" width="1" height="7" fill="#000"/>
<text transform="translate(0,508) scale(1,1.33)" x="382.5 389.5 396.5 403.5 410.5 417.5 424.5 431.5 438.5 445.5" y="0" fill="#000" text-anchor="middle" font-size="10.2" stroke="#000" stroke-width="0.1">2026/04/14</text>
<text transform="translate(0,522) scale(1,1.33)" x="381.5 388.5 395.5 402.5 409.5 416.5 423.5 430.5 437.5 444.5" y="0" fill="#000" text-anchor="middle" font-size="10.2" stroke="#000" stroke-width="0.1">11:58:13.8</text>
<rect x="451" y="498" width="1" height="7" fill="#000"/>
<text transform="translate(0,508) scale(1,1.33)" x="458.5 465.5 472.5 479.5 486.5 493.5 500.5 507.5 514.5 521.5" y="0" fill="#000" text-anchor="middle" font-size="10.2" stroke="#000" stroke-width="0.1">2026/04/14</text>
<text transform="translate(0,522) scale(1,1.33)" x="457.5 464.5 471.5 478.5 485.5 492.5 499.5 506.5 513.5 520.5" y="0" fill="#000" text-anchor="middle" font-size="10.2" stroke="#000" stroke-width="0.1">14:58:13.8</text>
<rect x="527" y="498" width="1" height="7" fill="#000"/>
<text transform="translate(0,508) scale(1,1.33)" x="534.5 541.5 548.5 555.5 562.5 569.5 576.5 583.5 590.5 597.5" y="0" fill="#000" text-anchor="middle" font-size="10.2" stroke="#000" stroke-width="0.1">2026/04/14</text>
<text transform="translate(0,522) scale(1,1.33)" x="533.5 540.5 547.5 554.5 561.5 568.5 575.5 582.5 589.5 596.5" y="0" fill="#000" text-anchor="middle" font-size="10.2" stroke="#000" stroke-width="0.1">17:58:13.8</text>
</svg>
<svg class="lg" style="left:22px" width="96" height="39" viewBox="0 0 96 39" font-family='"Liberation Mono","Noto Serif CJK SC",monospace' font-size="13"><text transform="translate(0,11) scale(1,1.33)" x="3.5 10.5 17.5 24.5 31.5 38.5 45.5 52.5" y="0" fill="#00FF00" text-anchor="middle" font-size="10.2" stroke="#00FF00" stroke-width="0.1">RFD-10MS</text><text x="63 77 91" y="11.5" fill="#00FF00" text-anchor="middle" font-size="12.5">試料室</text><text transform="translate(0,24) scale(1,1.33)" x="3.5 10.5 17.5 24.5 31.5 38.5 45.5 52.5" y="0" fill="#00FF00" text-anchor="middle" font-size="10.2" stroke="#00FF00" stroke-width="0.1">CH1 [mV]</text><text transform="translate(0,37) scale(1,1.33)" x="3.5 10.5 17.5 24.5" y="0" fill="#00FF00" text-anchor="middle" font-size="10.2" stroke="#00FF00" stroke-width="0.1">-0.0</text></svg>
<svg class="lg" style="left:119px" width="96" height="39" viewBox="0 0 96 39" font-family='"Liberation Mono","Noto Serif CJK SC",monospace' font-size="13"><text transform="translate(0,11) scale(1,1.33)" x="3.5 10.5 17.5 24.5 31.5 38.5 45.5 52.5" y="0" fill="#1470AA" text-anchor="middle" font-size="10.2" stroke="#1470AA" stroke-width="0.1">FDU-2110</text><text x="63 77 91" y="11.5" fill="#1470AA" text-anchor="middle" font-size="12.5">試料室</text><text transform="translate(0,24) scale(1,1.33)" x="3.5 10.5 17.5 24.5 31.5 38.5 45.5 52.5" y="0" fill="#1470AA" text-anchor="middle" font-size="10.2" stroke="#1470AA" stroke-width="0.1">CH2 [mV]</text><text transform="translate(0,37) scale(1,1.33)" x="3.5 10.5 17.5" y="0" fill="#1470AA" text-anchor="middle" font-size="10.2" stroke="#1470AA" stroke-width="0.1">6.8</text></svg>
<svg class="lg" style="left:216px" width="96" height="39" viewBox="0 0 96 39" font-family='"Liberation Mono","Noto Serif CJK SC",monospace' font-size="13"><text transform="translate(0,11) scale(1,1.33)" x="3.5 10.5 17.5 24.5" y="0" fill="#000080" text-anchor="middle" font-size="10.2" stroke="#000080" stroke-width="0.1">HALL</text><text transform="translate(0,24) scale(1,1.33)" x="3.5 10.5 17.5 24.5 31.5 38.5 45.5 52.5" y="0" fill="#000080" text-anchor="middle" font-size="10.2" stroke="#000080" stroke-width="0.1">CH3 [mV]</text><text transform="translate(0,37) scale(1,1.33)" x="3.5 10.5 17.5" y="0" fill="#000080" text-anchor="middle" font-size="10.2" stroke="#000080" stroke-width="0.1">9.6</text></svg>
<svg class="lg" style="left:313px" width="96" height="39" viewBox="0 0 96 39" font-family='"Liberation Mono","Noto Serif CJK SC",monospace' font-size="13"><text transform="translate(0,11) scale(1,1.33)" x="3.5 10.5 17.5 24.5 31.5 38.5 45.5" y="0" fill="#D00000" text-anchor="middle" font-size="10.2" stroke="#D00000" stroke-width="0.1">FDU-830</text><text x="56 70 84" y="11.5" fill="#D00000" text-anchor="middle" font-size="12.5">試料室</text><text transform="translate(0,24) scale(1,1.33)" x="3.5 10.5 17.5 24.5 31.5 38.5 45.5 52.5" y="0" fill="#D00000" text-anchor="middle" font-size="10.2" stroke="#D00000" stroke-width="0.1">CH4 [mV]</text><text transform="translate(0,37) scale(1,1.33)" x="3.5 10.5 17.5 24.5" y="0" fill="#D00000" text-anchor="middle" font-size="10.2" stroke="#D00000" stroke-width="0.1">10.1</text></svg>
<svg class="lg" style="left:410px" width="96" height="39" viewBox="0 0 96 39" font-family='"Liberation Mono","Noto Serif CJK SC",monospace' font-size="13"><text transform="translate(0,11) scale(1,1.33)" x="3.5 10.5 17.5 24.5 31.5 38.5 45.5" y="0" fill="#800080" text-anchor="middle" font-size="10.2" stroke="#800080" stroke-width="0.1">FDU-830</text><text x="56 70 84 98" y="11.5" fill="#800080" text-anchor="middle" font-size="12.5">トラック</text><text transform="translate(0,24) scale(1,1.33)" x="3.5 10.5 17.5 24.5 31.5 38.5 45.5 52.5" y="0" fill="#800080" text-anchor="middle" font-size="10.2" stroke="#800080" stroke-width="0.1">CH5 [mV]</text><text transform="translate(0,37) scale(1,1.33)" x="3.5 10.5 17.5" y="0" fill="#800080" text-anchor="middle" font-size="10.2" stroke="#800080" stroke-width="0.1">1.8</text></svg>
<svg class="lg" style="left:507px" width="96" height="39" viewBox="0 0 96 39" font-family='"Liberation Mono","Noto Serif CJK SC",monospace' font-size="13"><text transform="translate(0,11) scale(1,1.33)" x="3.5 10.5 17.5 24.5 31.5 38.5 45.5 52.5" y="0" fill="#000000" text-anchor="middle" font-size="10.2" stroke="#000000" stroke-width="0.1">FDU-2110</text><text x="63 77 91 105" y="11.5" fill="#000000" text-anchor="middle" font-size="12.5">トラック</text><text transform="translate(0,24) scale(1,1.33)" x="3.5 10.5 17.5 24.5 31.5 38.5 45.5 52.5" y="0" fill="#000000" text-anchor="middle" font-size="10.2" stroke="#000000" stroke-width="0.1">CH6 [mV]</text><text transform="translate(0,37) scale(1,1.33)" x="3.5 10.5 17.5" y="0" fill="#000000" text-anchor="middle" font-size="10.2" stroke="#000000" stroke-width="0.1">3.5</text></svg>
<div class="raised" style="left:22px;top:612px;width:81px;height:25px"></div>
<span id="b_alarm" class="t " style="left:29px;top:616px;transform:scaleX(0.5667);font-size:15px;line-height:15px">アラームリセット</span>
<div class="sunken" style="left:110px;top:612px;width:494px;height:25px"></div>
<div class="raised" style="left:587px;top:614px;width:15px;height:21px"><div style="left:4px;top:9px;width:0;height:0;border-left:3.5px solid transparent;border-right:3.5px solid transparent;border-top:4px solid #000"></div></div>
<div class="spane" style="left:0;top:719px;width:150px;height:19px"></div>
<div class="spane" style="left:152px;top:719px;width:872px;height:19px"></div>
<span id="st" class="t " style="left:2px;top:721px;transform:scaleX(0.7308);font-size:13px;line-height:13px">保存ウェイト！！</span>
<div style="left:0;top:739px;width:1024px;height:1px;background:#fff"></div>
<div class="raised" style="left:2px;top:742px;width:62px;height:22px"></div>
<svg style="left:5px;top:745px" width="16" height="16" viewBox="0 0 16 16">
<path d="M1 3 C3 1.5 5 1.5 7 3 L6 8 C4 6.5 2.5 6.5 0.5 8 Z" fill="#E8502A"/>
<path d="M8 3.4 C10 5 12 5 14.5 3.2 L13.5 8.4 C11.5 10 9.5 10 7.2 8.4 Z" fill="#6CB83A"/>
<path d="M0.3 9 C2.3 7.5 4 7.5 6 9 L5 14 C3 12.5 1.5 12.5 -0.5 14 Z" fill="#3A6FD8"/>
<path d="M7 9.4 C9 11 11 11 13.3 9.4 L12.3 14.4 C10.3 16 8.3 16 6 14.4 Z" fill="#F2C12E"/>
</svg>
<span id="start" class="t " style="left:23px;top:746px;transform:scaleX(0.7917);font-weight:bold;font-size:12px">スタート</span>
<svg style="left:71px;top:744px" width="18" height="18" viewBox="0 0 18 18">
<circle cx="9" cy="10" r="6.5" fill="#3A8FE0"/><circle cx="9" cy="10" r="3" fill="#D4D0C8"/><rect x="9" y="10" width="7" height="2.2" fill="#D4D0C8"/>
<rect x="5" y="8.6" width="9" height="2" fill="#3A8FE0"/>
<path d="M2 12 C4 2 14 1 16 4" stroke="#5AB0F0" stroke-width="1.6" fill="none"/></svg>
<svg style="left:94px;top:744px" width="18" height="18" viewBox="0 0 18 18">
<path d="M1 5 L3 3 H8 L10 5 H16 V15 H1 Z" fill="#E8C060" stroke="#A88020" stroke-width="0.8"/>
<path d="M3 8 H17 L15 15 H1 Z" fill="#F4DC90" stroke="#A88020" stroke-width="0.8"/>
<circle cx="8" cy="9" r="3.2" fill="#D8ECF8" stroke="#8090A0" stroke-width="1"/></svg>
<svg style="left:117px;top:744px" width="18" height="18" viewBox="0 0 18 18">
<rect x="1.5" y="3" width="13" height="13" rx="2.5" fill="#3A80D8" stroke="#1C50A0" stroke-width="1"/>
<rect x="4.5" y="5.5" width="7" height="8" fill="#fff"/><path d="M6 8h4M6 10h4" stroke="#3A80D8"/>
<path d="M10 7 L15 2" stroke="#F0B030" stroke-width="2"/></svg>
<div style="left:142px;top:742px;width:159px;height:22px;background:repeating-conic-gradient(#fff 0% 25%,#D4D0C8 0% 50%) 0 0/2px 2px;box-shadow:inset -1px -1px 0 #fff,inset 1px 1px 0 #404040,inset 2px 2px 0 #808080"></div>
<svg style="left:147px;top:746px" width="16" height="16" viewBox="0 0 16 16">
<rect x="0" y="0" width="16" height="16" fill="#1c1c34"/>
<rect x="1.5" y="1" width="13.5" height="6.5" fill="#fff"/>
<rect x="1.5" y="5" width="13.5" height="2.5" fill="#a4e09c"/>
<path d="M2 2.6H7M7 4H12" stroke="#b0b8f0" stroke-width="0.9" fill="none"/><path d="M5 4.4H10L13 2.5" stroke="#e89090" stroke-width="0.9" fill="none"/>
<rect x="0.5" y="7.5" width="15.5" height="2" fill="#a8a8a8"/>
<rect x="1.5" y="9.5" width="13.5" height="6" fill="#fff"/>
<rect x="3" y="10.5" width="2.7" height="4.7" fill="#d02020"/><rect x="7" y="10.5" width="2.6" height="4.7" fill="#1010c0"/><rect x="11" y="10.5" width="2.8" height="4.7" fill="#20d020"/>
</svg>
<span id="task" class="t " style="left:167px;top:746px;transform:scaleX(0.8099);font-weight:bold;font-size:13px;line-height:13px">ソフトサーモ　E830</span>
<div style="left:929px;top:742px;width:93px;height:23px;box-shadow:inset -1px -1px 0 #fff,inset 1px 1px 0 #808080"></div>
<svg style="left:912px;top:746px" width="14" height="16" viewBox="0 0 14 16" shape-rendering="crispEdges">
<path d="M5 1v2h1v1h1v-1h1v1h1v-1h1v1h1" stroke="#000" fill="none"/>
<rect x="1.5" y="6.5" width="12" height="8" rx="1" fill="#fff" stroke="#000"/>
<path d="M3 9h9M3 11h9" stroke="#000" stroke-dasharray="1 1"/><path d="M4 13h7" stroke="#000"/></svg>
<span id="chev" class="t " style="left:934px;top:748px;transform:scaleX(1.1429);font-weight:bold;font-size:13px">«</span>
<svg style="left:947px;top:745px" width="15" height="17" viewBox="0 0 15 17">
<path d="M7.5 1 C5.5 2.5 3 3 1 3 C1 9 2.5 13.5 7.5 16 C12.5 13.5 14 9 14 3 C12 3 9.5 2.5 7.5 1 Z" fill="#F0D020" stroke="#707888" stroke-width="1.2"/>
<rect x="6.7" y="5" width="1.8" height="5" fill="#202020"/><rect x="6.7" y="11" width="1.8" height="1.8" fill="#202020"/></svg>
<svg style="left:966px;top:746px" width="14" height="14" viewBox="0 0 14 14">
<path d="M7 0.8 L8.8 5 L13.3 5.3 L9.8 8.2 L11 12.8 L7 10.2 L3 12.8 L4.2 8.2 L0.7 5.3 L5.2 5 Z" fill="#F4E040" stroke="#B09820" stroke-width="0.8"/></svg>
<span id="clock" class="t " style="left:988px;top:748px;transform:scaleX(0.8333);font-size:12px">17:58</span>
</div>
</body></html>
